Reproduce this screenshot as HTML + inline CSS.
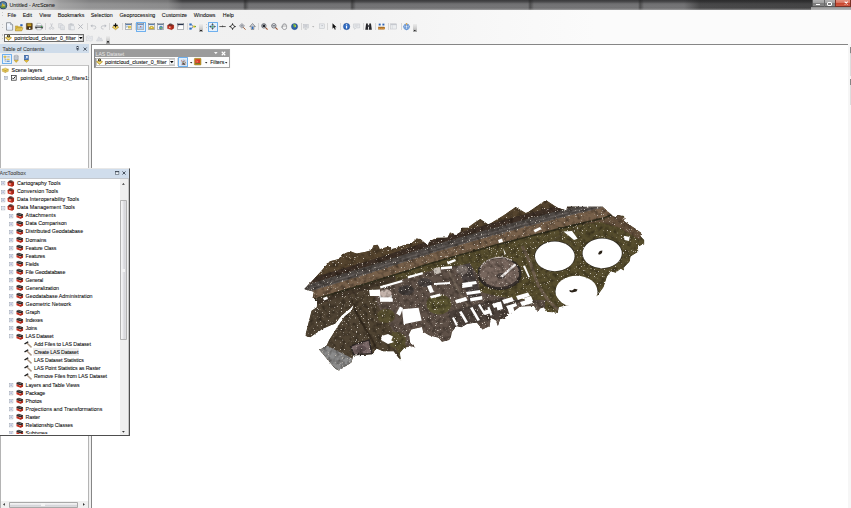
<!DOCTYPE html>
<html lang="en">
<head>
<meta charset="utf-8">
<title>Untitled - ArcScene</title>
<style>
html,body{margin:0;padding:0;}
body{width:851px;height:508px;overflow:hidden;background:#f0f0f0;position:relative;
 font-family:"Liberation Sans",sans-serif;font-size:5.3px;color:#0c0c0c;line-height:1;}
.a{position:absolute;}
svg{overflow:visible;}
.t{position:absolute;white-space:nowrap;line-height:8px;height:8px;-webkit-text-stroke:0.07px currentColor;}
#titlebar{left:0;top:0;width:851px;height:9.8px;
 background:
  linear-gradient(to bottom,rgba(60,60,62,.0) 0,rgba(60,60,62,0) 80%,rgba(200,200,200,.55) 100%),
  linear-gradient(to right,rgba(226,226,226,.96) 0,rgba(212,212,212,.92) 40px,rgba(176,176,176,.8) 60px,rgba(168,168,168,.62) 90px,rgba(160,160,160,.55) 168px,rgba(120,120,120,0) 182px),
  linear-gradient(to right,rgba(30,30,30,0) 684px,rgba(30,30,30,.5) 700px,rgba(30,30,30,.55) 811px),
  linear-gradient(to right,transparent 243px,rgba(30,30,30,.5) 245px,transparent 249px,transparent 350px,rgba(30,30,30,.5) 352px,transparent 356px,transparent 528px,rgba(30,30,30,.45) 530px,transparent 534px,transparent 638px,rgba(30,30,30,.45) 640px,transparent 644px),
  linear-gradient(to bottom,#39393b 0,#4a4a4c 18%,#6e6e70 38%,#757577 60%,#6c6c6e 100%);}
#chrome{left:0;top:9.7px;width:851px;height:34.6px;background:linear-gradient(to right,#f0f0f0 0,#f1f1f1 35%,#fbfbfb 70%,#fbfbfb 100%);}
.menu{top:11.3px;font-size:5.35px;}
.sep{position:absolute;width:0.5px;height:7.2px;background:#d6d6d6;top:23.3px;}
.grip{position:absolute;width:0.8px;height:8.6px;top:22.8px;background:repeating-linear-gradient(to bottom,#cacaca 0,#cacaca 0.5px,transparent 0.5px,transparent 1.4px);}
.ovf{position:absolute;width:4.2px;height:7.6px;background:linear-gradient(to bottom,#ececec,#d0d0d0 50%,#a4a4a4);}
.ovf:after{content:"";position:absolute;left:1.3px;bottom:0.5px;border-left:0.8px solid transparent;border-right:0.8px solid transparent;border-top:1px solid #222;}
.ovf:before{content:"";position:absolute;left:1.3px;bottom:2px;width:1.6px;height:0.45px;background:#333;}
.selbtn{position:absolute;box-sizing:border-box;border:0.7px solid #6fb0ee;background:#e3f0fc;border-radius:0.6px;}
#scene{left:91.2px;top:44.2px;width:757px;height:464px;background:#fff;border-left:1px solid #868686;border-top:1px solid #868686;box-sizing:border-box;}
#tochead{left:0;top:44.3px;width:89.4px;height:8.8px;background:#cfdcea;}
#toctree{left:0.4px;top:64.8px;width:88.4px;height:444px;background:#fff;border:0.6px solid #b4b4b4;border-top-color:#c4c4c4;box-sizing:border-box;}
#atb{left:-1px;top:167.6px;width:130.8px;height:268.4px;background:#fff;border-right:1.2px solid #4e4e4e;border-bottom:1.2px solid #4e4e4e;border-top:0.6px solid #e8e8e8;box-sizing:border-box;overflow:hidden;}
#atbhead{left:0;top:0.8px;width:129.8px;height:9.2px;background:#d0ddec;}
.row{position:absolute;left:0;height:8.05px;width:121px;}
.row .t{top:-0.4px;line-height:8.05px;height:8.05px;font-size:5.3px;}
#las{left:93.6px;top:48.9px;width:136.2px;height:19.2px;background:#fdfdfd;border:0.8px solid #a4a4a4;border-left-color:#8a8a8a;box-sizing:border-box;box-shadow:0.4px 0.4px 0.6px rgba(0,0,0,.35);}
#lashead{left:0;top:0;width:134.6px;height:7.2px;background:#9b9b9b;}
.combo{position:absolute;box-sizing:border-box;background:#fff;border:0.7px solid #6d6d6d;}
.cbtn{position:absolute;box-sizing:border-box;background:linear-gradient(#ffffff,#f0f0f0);border:0.3px solid #d0d0d0;}
.darr{position:absolute;width:0;height:0;border-left:1.5px solid transparent;border-right:1.5px solid transparent;border-top:1.9px solid #111;}
</style>
</head>
<body>

<div id="titlebar" class="a"></div>
<svg class="a" style="left:-1px;top:0.6px;width:8.4px;height:8.4px;" viewBox="0 0 16 16" preserveAspectRatio="none"><circle cx="8" cy="8" r="7.6" fill="#2a3f5c"/><circle cx="8" cy="8" r="6.2" fill="#4f7fa8"/><path d="M2 9 A6.2 6.2 0 0 0 14 9 Z" fill="#5f8a3a"/><path d="M5 10 L7 4 L8.4 8 L9.6 5 L11.4 10Z" fill="#e9d24a"/><path d="M7 4 L8.4 8 L7.4 10 L5 10Z" fill="#c9a62a"/></svg>
<div class="t" style="left:9.5px;top:0.7px;font-size:5.32px;color:#1e1e1e;">Untitled - ArcScene</div>
<div class="a" style="left:811px;top:7px;width:40px;height:2.6px;background:linear-gradient(#8e8e8e,#b8b8b8);"></div>
<div class="a" style="left:811.6px;top:0;width:24px;height:7.2px;background:linear-gradient(#b2b2b2,#a2a2a2 46%,#7c7c7c 54%,#868686);border:0.5px solid #5a5a5a;border-top:none;box-sizing:border-box;border-radius:0 0 0 1.4px;"></div>
<div class="a" style="left:823.6px;top:0;width:0.5px;height:7px;background:#6a6a6a;"></div>
<div class="a" style="left:835.4px;top:0;width:15.6px;height:7.2px;background:linear-gradient(#e4917e,#d9735e 46%,#c8442c 54%,#d05a42);border:0.5px solid #7a3226;border-top:none;box-sizing:border-box;"></div>
<div class="a" style="left:815.8px;top:4px;width:4.4px;height:1.3px;background:#fff;box-shadow:0 0 0.6px #444;"></div>
<div class="a" style="left:827px;top:1.6px;width:4.8px;height:4px;border:1.1px solid #fff;box-sizing:border-box;border-radius:1px;box-shadow:0 0 0.6px #444;"></div>
<svg class="a" style="left:844.3px;top:1.3px;width:4.4px;height:4px;" viewBox="0 0 10 10" preserveAspectRatio="none"><path d="M1.5 1.5L8.5 8.5M8.5 1.5L1.5 8.5" stroke="#fff" stroke-width="2.4"/></svg>
<div id="chrome" class="a"></div>
<div class="grip" style="left:2.4px;top:11.4px;height:7.6px;"></div>
<div class="t menu" style="left:7.6px;">File</div>
<div class="t menu" style="left:22.8px;">Edit</div>
<div class="t menu" style="left:39.3px;">View</div>
<div class="t menu" style="left:57.7px;">Bookmarks</div>
<div class="t menu" style="left:90.8px;">Selection</div>
<div class="t menu" style="left:119.4px;">Geoprocessing</div>
<div class="t menu" style="left:161.8px;">Customize</div>
<div class="t menu" style="left:193.8px;">Windows</div>
<div class="t menu" style="left:222.8px;">Help</div>
<div class="grip" style="left:2.4px;"></div>
<svg class="a" style="left:6.2px;top:23.3px;width:7.1px;height:7.1px;" viewBox="0 0 16 16" preserveAspectRatio="none"><path d="M1.2 -0.6H10.4L15 4V16H1.2Z" fill="#f4f8fe" stroke="#6a7078" stroke-width="1.5"/><path d="M10.4 -0.6V4H15" fill="#d4deec" stroke="#6a7078" stroke-width="1.1"/><path d="M3 8H13V14.6H3Z" fill="#e6eefa"/></svg>
<svg class="a" style="left:15.2px;top:23.6px;width:8.1px;height:7.3px;" viewBox="0 0 16 16" preserveAspectRatio="none"><rect x="10.5" y="0.5" width="4.5" height="4.2" fill="#2e62b8"/><path d="M0.8 4.2H5.6L7 5.8H13.4V14.8H0.8Z" fill="#d9b43c" stroke="#9a7a1c" stroke-width="0.8"/><path d="M0.8 14.8L3.4 8.2H16L13.4 14.8Z" fill="#ecd060" stroke="#9a7a1c" stroke-width="0.8"/><path d="M4 11H12" stroke="#b8962a" stroke-width="1"/></svg>
<svg class="a" style="left:25.6px;top:23.2px;width:6.7px;height:6.9px;" viewBox="0 0 16 16" preserveAspectRatio="none"><rect x="0.8" y="0.8" width="14.4" height="14.4" rx="1" fill="#5a3c14" stroke="#3c260a" stroke-width="0.8"/><rect x="3.4" y="1.2" width="9.2" height="6" fill="#c9a326"/><rect x="3.4" y="3.4" width="9.2" height="1" fill="#8c6c14"/><rect x="4" y="9.6" width="8" height="5.2" fill="#2c2418"/><rect x="7" y="10.4" width="3.6" height="3.6" fill="#f2f2f2"/></svg>
<svg class="a" style="left:34.9px;top:23.2px;width:8.1px;height:7.3px;" viewBox="0 0 16 16" preserveAspectRatio="none"><path d="M4 0.8H10.5L12.4 3V7H4Z" fill="#fafcff" stroke="#8f959c" stroke-width="0.8"/><rect x="0.8" y="6" width="14.4" height="6.4" rx="1.2" fill="#b9bcc2" stroke="#5c5f66" stroke-width="0.8"/><rect x="0.8" y="8.6" width="14.4" height="2.6" fill="#2c2c30"/><circle cx="12.8" cy="8" r="1.3" fill="#2fae3c"/><path d="M3.6 10.4H12.4V15H3.6Z" fill="#f6f8fb" stroke="#80858c" stroke-width="0.8"/></svg>
<div class="sep" style="left:44.9px;"></div>
<svg class="a" style="left:47.8px;top:23.3px;width:7.1px;height:7.1px;" viewBox="0 0 16 16" preserveAspectRatio="none"><path d="M6 1L9 9M10 1L7 9" stroke="#bfc2c8" stroke-width="1.6" fill="none"/><circle cx="5" cy="12" r="2.2" fill="none" stroke="#bfc2c8" stroke-width="1.5"/><circle cx="11" cy="12" r="2.2" fill="none" stroke="#bfc2c8" stroke-width="1.5"/></svg>
<svg class="a" style="left:57.8px;top:23.3px;width:7.1px;height:7.1px;" viewBox="0 0 16 16" preserveAspectRatio="none"><path d="M1.5 1.5H8L10 3.5V11H1.5Z" fill="#e4e6ea" stroke="#bfc2c8" stroke-width="1.2"/><path d="M6 5H12.5L14.5 7V15H6Z" fill="#e9ebee" stroke="#bfc2c8" stroke-width="1.2"/><path d="M8 9H12.6M8 11H12.6M8 13H12.6" stroke="#bfc2c8" stroke-width="0.8"/></svg>
<svg class="a" style="left:67.6px;top:23.3px;width:7.1px;height:7.1px;" viewBox="0 0 16 16" preserveAspectRatio="none"><rect x="1.5" y="2.5" width="11" height="12.5" rx="1" fill="#d4d6db" stroke="#bfc2c8" stroke-width="1.2"/><rect x="4.5" y="1" width="5" height="3" fill="#c2c5cb"/><path d="M6 6H12.5L14.5 8V15.4H6Z" fill="#eceef1" stroke="#bfc2c8" stroke-width="1.1"/></svg>
<svg class="a" style="left:77.4px;top:23.3px;width:7.1px;height:7.1px;" viewBox="0 0 16 16" preserveAspectRatio="none"><path d="M3 3L13 13M13 3L3 13" stroke="#b4b7bd" stroke-width="2.2" fill="none"/></svg>
<div class="sep" style="left:86.9px;"></div>
<svg class="a" style="left:90px;top:23.3px;width:7.1px;height:7.1px;" viewBox="0 0 16 16" preserveAspectRatio="none"><path d="M3.2 6.4H9.5A3.6 3.6 0 0 1 9.5 13.6H8" stroke="#b9bcc2" stroke-width="1.8" fill="none"/><path d="M1 6.4L5.4 2.6V10.2Z" fill="#b9bcc2"/></svg>
<svg class="a" style="left:100px;top:23.3px;width:7.1px;height:7.1px;" viewBox="0 0 16 16" preserveAspectRatio="none"><path d="M12.8 6.4H6.5A3.6 3.6 0 0 0 6.5 13.6H8" stroke="#b9bcc2" stroke-width="1.8" fill="none"/><path d="M15 6.4L10.6 2.6V10.2Z" fill="#b9bcc2"/></svg>
<div class="sep" style="left:108.9px;"></div>
<svg class="a" style="left:112.3px;top:23.3px;width:7.1px;height:7.1px;" viewBox="0 0 16 16" preserveAspectRatio="none"><path d="M0.6 9.4L8 5.2L15.4 9.4L8 15.2Z" fill="#e8c23c" stroke="#8a6a18" stroke-width="0.9"/><path d="M3.6 9.6L8 7.2L12.4 9.6L8 12.6Z" fill="#f6e288"/><path d="M8 0.6V10.2M3.2 5.4H12.8" stroke="#111" stroke-width="2.6"/></svg>
<div class="sep" style="left:121.8px;"></div>
<svg class="a" style="left:124.8px;top:23.3px;width:7.1px;height:7.1px;" viewBox="0 0 16 16" preserveAspectRatio="none"><rect x="0.7" y="1.7" width="14.6" height="12.6" fill="#fdfdfd" stroke="#5f666e" stroke-width="1"/><rect x="1.2" y="2.2" width="13.6" height="2.6" fill="#5d7da8"/><rect x="6.5" y="6.4" width="7" height="6" fill="#e9c84a"/><path d="M3 11L6 8L8 10L10 9" stroke="#5a88c0" stroke-width="1.2" fill="none"/><rect x="2.6" y="6.4" width="3.4" height="2.6" fill="#9bb8dc"/></svg>
<div class="sep" style="left:134.6px;"></div>
<div class="selbtn" style="left:135.9px;top:21.9px;width:9.9px;height:9.8px;"></div>
<svg class="a" style="left:137.4px;top:23.3px;width:7.1px;height:7.1px;" viewBox="0 0 16 16" preserveAspectRatio="none"><rect x="0.7" y="1.7" width="14.6" height="12.6" fill="#eef4fb" stroke="#5f666e" stroke-width="1"/><rect x="1.2" y="2.2" width="13.6" height="2.6" fill="#6c8fbe"/><rect x="2.4" y="6" width="11.2" height="7" fill="#bcd6f2"/><rect x="7" y="7.2" width="2.6" height="2.6" fill="#d04a3a"/><rect x="3" y="10.6" width="10" height="1.4" fill="#7fa6d6"/></svg>
<svg class="a" style="left:147.8px;top:23.3px;width:7.1px;height:7.1px;" viewBox="0 0 16 16" preserveAspectRatio="none"><rect x="0.7" y="1.7" width="14.6" height="12.6" fill="#fdfdfd" stroke="#5f666e" stroke-width="1"/><rect x="1.2" y="2.2" width="13.6" height="2.6" fill="#5d7da8"/><path d="M3 13.6V9.4L5.4 7.6H10.6L13 9.4V13.6Z" fill="#d9b830" stroke="#8c7414" stroke-width="0.7"/><rect x="6.6" y="9" width="2.8" height="2.4" fill="#f3e7a4"/></svg>
<svg class="a" style="left:157.4px;top:23.3px;width:7.1px;height:7.1px;" viewBox="0 0 16 16" preserveAspectRatio="none"><rect x="0.7" y="1.7" width="14.6" height="12.6" fill="#fdfdfd" stroke="#5f666e" stroke-width="1"/><rect x="1.2" y="2.2" width="13.6" height="2.6" fill="#6a7f9c"/><circle cx="9" cy="10.8" r="4" fill="#3b7fc4" stroke="#2a5a90" stroke-width="0.6"/><path d="M6.6 10.6Q8.6 7.6 11.4 9.6Q10.4 12.4 8 12.8Z" fill="#7cbf4a"/><path d="M9 12.2L11 14.4L12.6 12.4" fill="#e8c23c"/></svg>
<svg class="a" style="left:167px;top:23.3px;width:7.1px;height:7.1px;" viewBox="0 0 16 16" preserveAspectRatio="none"><path d="M1 5.4L5.4 2.6L15 4.6V11.6L10.4 15L1 12.4Z" fill="#c93422" stroke="#7a1e14" stroke-width="0.7"/><path d="M1 5.4L5.4 2.6L15 4.6L10.4 7.4Z" fill="#7a2a22"/><path d="M4.4 2.4L8 1L12 2.4V3.8L8 2.6L4.4 3.8Z" fill="#333"/><rect x="5" y="8" width="2.6" height="3.4" fill="#ead6cf"/><path d="M10.4 7.4L15 4.6V11.6L10.4 15Z" fill="#a22818"/></svg>
<svg class="a" style="left:176.8px;top:23.3px;width:7.1px;height:7.1px;" viewBox="0 0 16 16" preserveAspectRatio="none"><rect x="0.7" y="1.7" width="14.6" height="12.6" fill="#ffffff" stroke="#5f666e" stroke-width="1"/><rect x="1.2" y="2.2" width="13.6" height="2.6" fill="#26344c"/><rect x="2.6" y="6" width="2" height="1.4" fill="#333"/></svg>
<div class="sep" style="left:186.6px;"></div>
<svg class="a" style="left:189.2px;top:23.3px;width:7.1px;height:7.1px;" viewBox="0 0 16 16" preserveAspectRatio="none"><rect x="0.8" y="1" width="5.2" height="4.6" fill="#2f6fc2"/><rect x="0.8" y="10.4" width="5.2" height="4.6" fill="#2f6fc2"/><path d="M6 3.4L9 8L6 12.6" stroke="#2a5ea8" stroke-width="1.5" fill="none"/><ellipse cx="11.6" cy="8" rx="3.8" ry="2.6" fill="#e6c23a"/><path d="M12.6 8H15.6" stroke="#3fa24a" stroke-width="2.2"/></svg>
<div class="ovf" style="left:199.1px;top:24.4px;"></div>
<div class="grip" style="left:206.3px;"></div>
<div class="selbtn" style="left:208px;top:21.9px;width:9.9px;height:9.8px;"></div>
<svg class="a" style="left:209.3px;top:23.3px;width:7.1px;height:7.1px;" viewBox="0 0 16 16" preserveAspectRatio="none"><path d="M8 0.6L10.6 4H5.4ZM8 15.4L10.6 12H5.4ZM0.6 8L4 5.4V10.6ZM15.4 8L12 5.4V10.6Z" fill="#222"/><circle cx="8" cy="8" r="3.4" fill="#3f86cc"/><path d="M5.6 8.6Q8 5 10.6 7.6Q9.6 10.6 7 10.6Z" fill="#79c04c"/><circle cx="9.4" cy="6.8" r="1.1" fill="#f0d64c"/></svg>
<svg class="a" style="left:219.2px;top:23.3px;width:7.1px;height:7.1px;" viewBox="0 0 16 16" preserveAspectRatio="none"><path d="M0.8 8H15.2" stroke="#222" stroke-width="1.6"/><path d="M6.4 8Q8 11.6 9.6 8Z" fill="#222"/><path d="M8 4.6V8" stroke="#555" stroke-width="1"/></svg>
<svg class="a" style="left:228.6px;top:23.3px;width:7.1px;height:7.1px;" viewBox="0 0 16 16" preserveAspectRatio="none"><circle cx="8" cy="8" r="4" fill="#fff" stroke="#222" stroke-width="1.8"/><path d="M8 0.6V4.4M8 11.6V15.4M0.6 8H4.4M11.6 8H15.4" stroke="#222" stroke-width="2"/></svg>
<svg class="a" style="left:239px;top:23.3px;width:7.1px;height:7.1px;" viewBox="0 0 16 16" preserveAspectRatio="none"><path d="M9.6 9.6L14.6 15" stroke="#9a5a34" stroke-width="2.2"/><path d="M1 6.4L6.6 1.4L12.4 6.4L6.6 11.6Z" fill="#c9ccd2" stroke="#6c7078" stroke-width="1.2"/><path d="M4 6.4L6.6 4L9.4 6.4L6.6 9Z" fill="#8e939b"/></svg>
<svg class="a" style="left:248.8px;top:23.3px;width:7.1px;height:7.1px;" viewBox="0 0 16 16" preserveAspectRatio="none"><path d="M8 1L14.4 8H11V14.6H5V8H1.6Z" fill="#c8cbd1" stroke="#4e525a" stroke-width="1.1"/><rect x="6.6" y="8" width="3" height="5.6" fill="#2f6fc2"/></svg>
<div class="sep" style="left:258.2px;"></div>
<svg class="a" style="left:260.8px;top:23.3px;width:7.1px;height:7.1px;" viewBox="0 0 16 16" preserveAspectRatio="none"><path d="M9.8 9.8L14.8 14.8" stroke="#9a5030" stroke-width="2.4"/><circle cx="6.4" cy="6.4" r="5" fill="#e9edf2" stroke="#3c4048" stroke-width="1.5"/><rect x="3.6" y="3.6" width="5.6" height="5.6" fill="#23262c"/></svg>
<svg class="a" style="left:270.6px;top:23.3px;width:7.1px;height:7.1px;" viewBox="0 0 16 16" preserveAspectRatio="none"><path d="M9.8 9.8L14.8 14.8" stroke="#9a5030" stroke-width="2.4"/><circle cx="6.4" cy="6.4" r="5" fill="#e9edf2" stroke="#3c4048" stroke-width="1.5"/><rect x="3.2" y="5.2" width="6.4" height="2.4" fill="#555a62"/></svg>
<svg class="a" style="left:280.8px;top:23.3px;width:7.1px;height:7.1px;" viewBox="0 0 16 16" preserveAspectRatio="none"><path d="M3 9.6V5.4Q3.8 4.4 4.8 5.4V3Q5.8 2 6.8 3V2.2Q7.8 1.2 8.8 2.2V3Q9.8 2 10.8 3V5Q12 4.4 12.6 5.4V10.6Q12.6 14.6 8.6 14.6H7Q4.4 14.6 3 11.6L1.4 8.6Q2 7.4 3 8.4Z" fill="#f4f4f4" stroke="#53565c" stroke-width="1.1"/><path d="M5 6V9M7 5V9M9 5V9M11 6V9" stroke="#888" stroke-width="0.7"/></svg>
<svg class="a" style="left:290.8px;top:23.3px;width:7.1px;height:7.1px;" viewBox="0 0 16 16" preserveAspectRatio="none"><circle cx="8" cy="8" r="7" fill="#2a5fae" stroke="#1b3c74" stroke-width="0.9"/><path d="M5 3Q9 1.6 11 4.4Q12.6 7 10.4 9.4Q8.8 11 7 9.4Q4.4 7.4 5 3Z" fill="#6fb244"/><path d="M8.6 5.4Q11 5 11.4 7.4Q10.4 9.4 8.8 8.4Z" fill="#e9d04a"/><path d="M3.4 10Q5 10.4 5.6 12.4Q4.4 12.6 3.4 10Z" fill="#6fb244"/></svg>
<div class="sep" style="left:300.8px;"></div>
<svg class="a" style="left:303.3px;top:23.3px;width:7.1px;height:7.1px;" viewBox="0 0 16 16" preserveAspectRatio="none"><rect x="0.8" y="2.8" width="11" height="8.6" fill="#dcdee2" stroke="#b9bcc2" stroke-width="1"/><path d="M3 5.6H9.6M3 8H9.6" stroke="#b4b7bd" stroke-width="1"/><path d="M6 11.4V14.6M3.4 14.6H9" stroke="#b9bcc2" stroke-width="1.1"/></svg>
<svg class="a" style="left:312.0px;top:26.3px;width:2.4px;height:1.5px;" viewBox="0 0 10 6" preserveAspectRatio="none"><path d="M0 0H10L5 6Z" fill="#b4b4b4"/></svg>
<svg class="a" style="left:318.6px;top:23.3px;width:7.1px;height:7.1px;" viewBox="0 0 16 16" preserveAspectRatio="none"><rect x="1.4" y="2" width="10.6" height="10.6" fill="#e8eaed" stroke="#bcbfc5" stroke-width="1.1"/><rect x="5.4" y="4.4" width="3.4" height="2.6" fill="#c2c5cb"/></svg>
<div class="sep" style="left:327.4px;"></div>
<svg class="a" style="left:330.8px;top:23.3px;width:7.1px;height:7.1px;" viewBox="0 0 16 16" preserveAspectRatio="none"><path d="M3.4 0.8V13L6.4 10.2L8.6 15L10.8 14L8.6 9.4H12.6Z" fill="#111"/></svg>
<div class="sep" style="left:340px;"></div>
<svg class="a" style="left:342.7px;top:23.3px;width:7.1px;height:7.1px;" viewBox="0 0 16 16" preserveAspectRatio="none"><circle cx="8" cy="8" r="7.2" fill="#2b63b8" stroke="#1c4486" stroke-width="0.8"/><circle cx="8" cy="7" r="5" fill="#4a86d8" opacity="0.6"/><rect x="6.8" y="6.6" width="2.4" height="5.8" fill="#fff"/><circle cx="8" cy="4.2" r="1.4" fill="#fff"/></svg>
<svg class="a" style="left:352.6px;top:23.3px;width:7.1px;height:7.1px;" viewBox="0 0 16 16" preserveAspectRatio="none"><path d="M1 2H15V11H7L3.6 14.4V11H1Z" fill="#e6e8eb" stroke="#bfc2c8" stroke-width="1.1"/><path d="M3.6 5H12.4M3.6 7.6H10" stroke="#c3c6cc" stroke-width="1"/></svg>
<div class="sep" style="left:362.7px;"></div>
<svg class="a" style="left:364.8px;top:23.3px;width:7.1px;height:7.1px;" viewBox="0 0 16 16" preserveAspectRatio="none"><path d="M2.4 2.2H6.4L7.2 15H0.6ZM9.6 2.2H13.6L15.4 15H8.8Z" fill="#26262a"/><rect x="5.8" y="5" width="4.4" height="3.6" fill="#3a3a40"/><rect x="2.6" y="0.8" width="3.6" height="2" fill="#444"/><rect x="9.8" y="0.8" width="3.6" height="2" fill="#444"/></svg>
<div class="sep" style="left:374.7px;"></div>
<svg class="a" style="left:377.6px;top:23.3px;width:7.1px;height:7.1px;" viewBox="0 0 16 16" preserveAspectRatio="none"><rect x="1.6" y="1.4" width="4.4" height="4.2" fill="#2f63b4"/><rect x="10" y="1.4" width="4.4" height="4.2" fill="#2f63b4"/><rect x="0.6" y="9" width="14.8" height="5.2" fill="#d9923a" stroke="#8a5a1c" stroke-width="0.7"/><path d="M3 9V11.4M5.6 9V12.4M8 9V11.4M10.6 9V12.4M13 9V11.4" stroke="#5a3a10" stroke-width="0.8"/></svg>
<div class="sep" style="left:387.7px;"></div>
<svg class="a" style="left:390.4px;top:23.3px;width:7.1px;height:7.1px;" viewBox="0 0 16 16" preserveAspectRatio="none"><rect x="0.8" y="1.8" width="14.4" height="11.8" fill="#eceef0" stroke="#bcbfc5" stroke-width="1.1"/><rect x="1.2" y="2.2" width="13.6" height="2.6" fill="#c6c9cf"/><path d="M5.4 5V13.4" stroke="#c6c9cf" stroke-width="0.9"/></svg>
<div class="sep" style="left:400.7px;"></div>
<svg class="a" style="left:403px;top:23.3px;width:7.1px;height:7.1px;" viewBox="0 0 16 16" preserveAspectRatio="none"><circle cx="8" cy="8.6" r="6.4" fill="#eaf2fb" stroke="#2f6cc0" stroke-width="1.5"/><ellipse cx="8" cy="8.6" rx="6.4" ry="2.6" fill="none" stroke="#2f6cc0" stroke-width="1.1"/><ellipse cx="8" cy="8.6" rx="2.6" ry="6.4" fill="none" stroke="#2f6cc0" stroke-width="1.1"/><circle cx="8" cy="2" r="1.8" fill="#e7a83a"/></svg>
<div class="ovf" style="left:412.6px;top:24.4px;"></div>
<div class="grip" style="left:2.4px;top:34.4px;height:7.8px;"></div>
<div class="combo" style="left:3.9px;top:34.2px;width:80.2px;height:7.8px;"></div>
<svg class="a" style="left:5.2px;top:34.4px;width:7px;height:7px;" viewBox="0 0 16 16" preserveAspectRatio="none"><path d="M0.8 8.6L8 4.4L15.2 8.6L8 14.6Z" fill="#e4be38" stroke="#8a6a18" stroke-width="0.9"/><path d="M3.6 8.8L8 6.4L12.4 8.8L8 12Z" fill="#f7e68c"/><circle cx="8" cy="4.6" r="3.6" fill="#3c3420"/><circle cx="8" cy="4.2" r="1.6" fill="#e9d88c"/></svg>
<div class="t" style="left:14.3px;top:34.3px;font-size:5.3px;">pointcloud_cluster_0_filter</div>
<div class="cbtn" style="left:77.6px;top:35.1px;width:5.6px;height:6px;"></div><svg class="a" style="left:78.7px;top:37.2px;width:3.6px;height:2.2px;" viewBox="0 0 10 6" preserveAspectRatio="none"><path d="M0 0H10L5 6Z" fill="#000"/></svg>
<svg class="a" style="left:86.2px;top:34.9px;width:6.8px;height:6.8px;" viewBox="0 0 16 16" preserveAspectRatio="none"><path d="M1 3L6 1.6L10 4L15 2.4V13L10 14.6L6 12.4L1 14Z" fill="#e7e9ec" stroke="#c6c9ce" stroke-width="1"/><path d="M3 5L6 9L9 6L12.6 10" stroke="#cfd2d7" stroke-width="1.2" fill="none"/></svg>
<svg class="a" style="left:96.4px;top:34.9px;width:7.2px;height:6.8px;" viewBox="0 0 16 16" preserveAspectRatio="none"><path d="M1 14L6.4 4L9.4 9L11.4 6.6L15 14Z" fill="#dfe1e5" stroke="#c3c6cc" stroke-width="1"/><path d="M3.6 14L8 9.4L12 14" stroke="#c9ccd1" stroke-width="1" fill="none"/></svg>
<div class="ovf" style="left:106.0px;top:36.2px;"></div>
<div id="scene" class="a"></div>
<svg class="a" style="left:0;top:0;width:851px;height:508px;" viewBox="0 0 851 508">
<defs>
<filter id="rg" x="280" y="180" width="400" height="220" filterUnits="userSpaceOnUse" color-interpolation-filters="sRGB">
 <feTurbulence type="fractalNoise" baseFrequency="0.45" numOctaves="2" seed="11" result="n1"/>
 <feDisplacementMap in="SourceGraphic" in2="n1" scale="2.2" xChannelSelector="R" yChannelSelector="G" result="d"/>
 <feTurbulence type="fractalNoise" baseFrequency="0.85" numOctaves="2" seed="4" result="n2"/>
 <feColorMatrix in="n2" type="matrix" values="0 0 0 0 0.78  0 0 0 0 0.75  0 0 0 0 0.71  0 0 0 9 -6.0" result="dots"/>
 <feGaussianBlur in="dots" stdDeviation="0.45" result="dotsb"/>
 <feComposite in="dotsb" in2="d" operator="in" result="dotsin"/>
 <feColorMatrix in="n2" type="matrix" values="0 0 0 0 0.08  0 0 0 0 0.06  0 0 0 0 0.04  0 -4 0 0 1.5" result="dark"/>
 <feComposite in="dark" in2="d" operator="in" result="darkin"/>
 <feTurbulence type="fractalNoise" baseFrequency="0.22" numOctaves="2" seed="21" result="n3"/>
 <feColorMatrix in="n3" type="matrix" values="0 0 0 0 0.07  0 0 0 0 0.05  0 0 0 0 0.03  1.1 0 0 0 -0.48" result="mot"/>
 <feComposite in="mot" in2="d" operator="in" result="motin"/>
 <feMerge><feMergeNode in="d"/><feMergeNode in="motin"/><feMergeNode in="dotsin"/></feMerge>
</filter>
<filter id="rw" x="280" y="180" width="400" height="220" filterUnits="userSpaceOnUse" color-interpolation-filters="sRGB">
 <feTurbulence type="fractalNoise" baseFrequency="0.45" numOctaves="2" seed="11" result="n1"/>
 <feDisplacementMap in="SourceGraphic" in2="n1" scale="1.6" xChannelSelector="R" yChannelSelector="G"/>
</filter>
<clipPath id="oc"><polygon points="304.4,289.0 314.5,278.4 329.8,261.3 338.7,258.9 342.2,254.2 350.5,251.2 356.4,253.6 365.8,251.8 371.7,250.0 373.5,245.3 377.6,244.7 380.0,248.9 388.5,246.6 392.0,249.0 396.8,247.8 406.3,244.3 412.2,242.5 416.9,238.4 420.4,239.0 428.0,245.5 429.3,241.3 437.0,237.8 447.6,237.8 450.0,232.5 453.5,233.6 454.7,235.4 460.6,231.9 461.2,227.7 467.6,227.7 474.7,222.4 480.3,218.9 488.0,224.2 490.3,223.6 503.3,215.4 515.7,207.1 525.8,213.0 528.7,211.8 545.8,200.0 557.6,207.7 566.5,210.5 567.1,206.8 602.5,206.8 613.1,216.3 616.7,217.4 617.3,215.1 624.3,215.7 624.7,221.6 641.5,232.8 640.3,235.7 644.4,239.9 644.4,244.6 637.9,246.5 638.5,251.8 630.8,256.5 629.7,261.8 624.3,267.2 623.8,270.7 620.8,268.9 615.5,273.1 611.0,271.5 607.2,276.6 603.7,287.2 597.8,295.5 590.0,300.5 578.0,306.3 566.7,305.5 559.0,307.2 557.9,313.1 547.2,312.0 543.7,307.2 540.1,308.4 537.8,312.0 534.0,306.0 520.0,306.6 514.5,310.7 507.4,314.2 505.0,319.0 500.3,319.0 497.9,326.0 495.6,320.1 490.8,317.8 489.7,326.0 482.6,329.6 476.7,322.5 467.2,323.7 461.3,327.2 456.6,326.0 451.9,331.9 450.7,337.8 449.1,340.0 442.0,341.8 438.5,337.7 429.0,335.3 423.1,331.8 422.0,327.1 411.3,329.4 409.0,334.2 410.1,342.4 415.5,347.7 411.3,346.0 404.2,348.3 400.1,353.1 401.3,361.3 393.6,351.3 383.0,351.3 375.9,348.3 372.6,354.2 353.1,355.4 352.5,358.4 351.4,362.5 339.0,370.8 335.4,369.0 319.5,350.1 326.6,345.4 329.2,340.0 332.8,334.3 338.7,324.9 344.6,316.6 351.7,310.7 354.0,304.2 350.5,308.3 341.6,315.4 335.1,323.7 330.4,325.5 323.3,328.4 316.3,333.1 310.3,337.3 305.6,336.0 306.2,332.0 309.2,320.1 311.5,310.7 316.8,307.2 317.4,300.7 312.7,297.7 313.9,291.8"/></clipPath>
</defs>
<g filter="url(#rg)">
<g clip-path="url(#oc)">
<polygon points="304.4,289.0 314.5,278.4 329.8,261.3 338.7,258.9 342.2,254.2 350.5,251.2 356.4,253.6 365.8,251.8 371.7,250.0 373.5,245.3 377.6,244.7 380.0,248.9 388.5,246.6 392.0,249.0 396.8,247.8 406.3,244.3 412.2,242.5 416.9,238.4 420.4,239.0 428.0,245.5 429.3,241.3 437.0,237.8 447.6,237.8 450.0,232.5 453.5,233.6 454.7,235.4 460.6,231.9 461.2,227.7 467.6,227.7 474.7,222.4 480.3,218.9 488.0,224.2 490.3,223.6 503.3,215.4 515.7,207.1 525.8,213.0 528.7,211.8 545.8,200.0 557.6,207.7 566.5,210.5 567.1,206.8 602.5,206.8 613.1,216.3 616.7,217.4 617.3,215.1 624.3,215.7 624.7,221.6 641.5,232.8 640.3,235.7 644.4,239.9 644.4,244.6 637.9,246.5 638.5,251.8 630.8,256.5 629.7,261.8 624.3,267.2 623.8,270.7 620.8,268.9 615.5,273.1 611.0,271.5 607.2,276.6 603.7,287.2 597.8,295.5 590.0,300.5 578.0,306.3 566.7,305.5 559.0,307.2 557.9,313.1 547.2,312.0 543.7,307.2 540.1,308.4 537.8,312.0 534.0,306.0 520.0,306.6 514.5,310.7 507.4,314.2 505.0,319.0 500.3,319.0 497.9,326.0 495.6,320.1 490.8,317.8 489.7,326.0 482.6,329.6 476.7,322.5 467.2,323.7 461.3,327.2 456.6,326.0 451.9,331.9 450.7,337.8 449.1,340.0 442.0,341.8 438.5,337.7 429.0,335.3 423.1,331.8 422.0,327.1 411.3,329.4 409.0,334.2 410.1,342.4 415.5,347.7 411.3,346.0 404.2,348.3 400.1,353.1 401.3,361.3 393.6,351.3 383.0,351.3 375.9,348.3 372.6,354.2 353.1,355.4 352.5,358.4 351.4,362.5 339.0,370.8 335.4,369.0 319.5,350.1 326.6,345.4 329.2,340.0 332.8,334.3 338.7,324.9 344.6,316.6 351.7,310.7 354.0,304.2 350.5,308.3 341.6,315.4 335.1,323.7 330.4,325.5 323.3,328.4 316.3,333.1 310.3,337.3 305.6,336.0 306.2,332.0 309.2,320.1 311.5,310.7 316.8,307.2 317.4,300.7 312.7,297.7 313.9,291.8" fill="#564d2d"/>
<polygon points="300,285 360,270 395,275 400,300 385,330 370,360 300,375" fill="#4f4333"/>
<polygon points="372,292 400,280 440,268 470,264 478,275 480,292 497,296 520,300 545,300 545,320 440,345 410,350 392,330 380,310" fill="#5f5148"/>
<polygon points="352,300 372,292 380,310 392,330 400,360 372,356 366,330" fill="#4f4332"/>
<ellipse cx="438.8" cy="304.2" rx="12.4" ry="10.2" fill="#5c5632"/>
<ellipse cx="397" cy="340" rx="9" ry="8" fill="#585030"/>
<ellipse cx="386" cy="316" rx="9" ry="7" fill="#585030"/>
<polygon points="303.0,287.0 320.0,281.6 349.5,272.6 380.0,263.2 395.0,258.2 432.0,246.3 485.0,231.0 530.0,219.0 575.0,207.4 604.0,200.5 640.0,190.0 300.0,190.0 300.0,289.0" fill="#55442e"/>
<polygon points="303.0,281.0 320.0,275.6 349.5,266.6 380.0,257.2 395.0,252.2 432.0,240.3 485.0,225.0 530.0,213.0 575.0,201.4 604.0,194.5 604.0,200.0 575.0,206.9 530.0,218.5 485.0,230.5 432.0,245.8 395.0,257.7 380.0,262.7 349.5,272.1 320.0,281.1 303.0,286.5" fill="#3e3027"/>
<polygon points="575,208 603,206 625,218 642,234 640,240 620,228 600,222 585,224 572,226" fill="#64503c"/>
<polygon points="303.0,293.5 320.0,288.1 349.5,279.1 380.0,269.7 395.0,264.7 432.0,252.8 485.0,237.5 530.0,225.5 575.0,213.9 604.0,207.0 614.0,213.0 604.0,217.3 575.0,224.1 530.0,235.4 485.0,247.2 432.0,262.2 395.0,273.9 380.0,278.8 349.5,288.1 320.0,296.9 303.0,302.2" fill="#77604a"/>
<polygon points="303.0,302.2 320.0,296.9 349.5,288.1 380.0,278.8 395.0,273.9 395.0,280.4 380.0,285.3 349.5,294.6 320.0,303.4 303.0,308.7" fill="#42362a"/>
<polyline points="303.0,303.0 320.0,297.7 349.5,288.9 380.0,279.6 395.0,274.7 432.0,263.0 485.0,248.0 530.0,236.2 575.0,224.9 604.0,218.1 614.0,213.8" fill="none" stroke="#33301e" stroke-width="1.6"/>
<polygon points="303.0,286.2 320.0,280.8 349.5,271.8 380.0,262.4 395.0,257.4 432.0,245.5 485.0,230.2 530.0,218.2 575.0,206.6 604.0,199.7 604.0,207.2 575.0,214.1 530.0,225.7 485.0,237.7 432.0,253.0 395.0,264.9 380.0,269.9 349.5,279.3 320.0,288.3 303.0,293.7" fill="#4f4945"/>
<polyline points="303.0,290.4 320.0,285.0 349.5,276.0 380.0,266.6 395.0,261.6 432.0,249.7 485.0,234.4 530.0,222.4 575.0,210.8 604.0,203.9" fill="none" stroke="#615b58" stroke-width="1.6"/>
<polyline points="303.0,293.4 320.0,288.0 349.5,279.0 380.0,269.6 395.0,264.6 432.0,252.7 485.0,237.4 530.0,225.4 575.0,213.8 604.0,206.9" fill="none" stroke="#7d7672" stroke-width="0.6"/>
<polyline points="522,246 530,262 538,285 548,300 558,310" fill="none" stroke="#6e5e4c" stroke-width="3"/>
<polyline points="530,262 545,248 562,234 580,228" fill="none" stroke="#5c5238" stroke-width="1.5"/>
<ellipse cx="406" cy="290.4" rx="8" ry="4.8" fill="#443e3c"/>
<ellipse cx="424.9" cy="282.6" rx="7.4" ry="4.4" fill="#494240"/>
<polygon points="433.5,268.5 440,267 441,273 434.5,274.5" fill="#c9c1b8"/>
<polygon points="458,266 470,263 482,298 470,302" fill="#4a4240"/>
<polyline points="449,271 458,290 468,307" fill="none" stroke="#74665a" stroke-width="2.4"/>
<polygon points="448,312 500,298 520,300 505,318 470,324 452,330" fill="#4a403a"/>
<ellipse cx="499.6" cy="273.6" rx="22" ry="16.4" fill="#2f2a26"/>
<ellipse cx="499.2" cy="273" rx="20" ry="14.6" fill="#78675e"/>
<path d="M480 270 A20 14.6 0 0 1 512 260.5" fill="none" stroke="#c9bdb6" stroke-width="1.1"/>
<ellipse cx="501" cy="276" rx="4" ry="3" fill="#4a403c"/>
<polygon points="500.5,276 514.8,263.4 516.4,265 502.5,277.4" fill="#f4f0ee"/>
<path d="M482 280 A20 14.6 0 0 0 519 278" fill="none" stroke="#3a322e" stroke-width="2.2"/>
<ellipse cx="462" cy="270" rx="6" ry="5" fill="#7d726c"/>
<ellipse cx="385.6" cy="296.6" rx="6.4" ry="3.6" fill="#fbfbfb"/>
<ellipse cx="385.6" cy="293.6" rx="6" ry="4.4" fill="#c4b3ab"/>
<polygon points="349.6,345.4 369.7,338.9 372.6,354.2 353.1,355.4" fill="#2e2826"/>
<polygon points="351.6,346.4 368.6,340.8 371,353 354.2,354" fill="#7c6a6a"/>
<ellipse cx="361.5" cy="348.5" rx="5" ry="3" fill="#5e4f50"/>
<polyline points="352,300 358,316 372,340 378,352" fill="none" stroke="#3a2f22" stroke-width="2"/>
<polyline points="316,300 350,292 395,277" fill="none" stroke="#43382a" stroke-width="2.4"/>
<polygon points="319.5,350.1 326.6,345.4 352.5,358.4 351.4,362.5 339,370.8 335.4,369" fill="#8b8b8b"/>
</g>
</g>
<g filter="url(#rw)">
<ellipse cx="554.8" cy="256.2" rx="20.4" ry="15.4" fill="#2a261e"/><ellipse cx="554.8" cy="256.4" rx="19.8" ry="14.8" fill="#fff"/>
<ellipse cx="602.2" cy="253.2" rx="20.2" ry="15.4" fill="#2a261e"/><ellipse cx="602.2" cy="253.4" rx="19.6" ry="14.8" fill="#fff"/>
<path d="M555 294 A21.6 16.4 0 0 1 598.2 294" fill="none" stroke="#2e2a22" stroke-width="1"/><ellipse cx="576.5" cy="291.4" rx="21" ry="15.6" fill="#fff"/>
<polygon points="495.6,303.0 501.0,301.5 503.0,309.0 497.5,310.5" fill="#fff"/>
<polygon points="507.4,307.5 513.0,306.0 514.5,312.0 509.0,313.6" fill="#fff"/>
<polygon points="487.3,307.5 489.3,306.8 492.5,315.0 490.5,315.8" fill="#fff"/>
<polygon points="524.0,298.0 531.0,296.0 533.0,301.0 526.0,303.0" fill="#fff"/>
<polygon points="380.0,286.3 402.0,280.0 402.6,282.0 380.5,288.6" fill="#fff"/>
<polygon points="407.6,276.2 422.5,272.1 423.0,274.2 408.0,278.4" fill="#fff"/>
<polygon points="380.0,297.4 391.8,297.4 391.8,300.8 380.0,300.8" fill="#fff"/>
<polygon points="434.0,283.0 450.0,282.0 450.0,284.0 434.0,285.0" fill="#fff"/>
<polygon points="462.0,285.0 472.0,283.5 472.5,286.5 462.5,288.0" fill="#fff"/>
<polygon points="470.0,298.0 482.0,296.0 482.5,299.5 470.5,301.5" fill="#fff"/>
<polygon points="402.0,309.3 418.6,307.8 421.7,320.4 403.6,324.3" fill="#fff"/>
<polygon points="396.3,313.6 399.9,306.5 403.0,308.0 400.0,316.0" fill="#fff"/>
<polygon points="381.8,336.0 388.0,334.0 393.0,336.5 391.0,341.0 384.0,341.3" fill="#fff"/>
<polygon points="382.2,334.9 394.0,342.0 388.0,344.0 381.0,340.0" fill="#fff"/>
<polygon points="369.0,290.0 380.0,289.5 380.0,296.0 370.0,296.0" fill="#fff"/>
<polygon points="380.4,298.3 392.8,298.3 392.8,301.8 380.4,301.8" fill="#fff"/>
<polygon points="563.5,231.6 572.0,231.0 577.7,238.7 574.0,240.0" fill="#fff"/>
<polygon points="623.8,235.7 629.7,237.0 629.0,241.0 624.5,240.0" fill="#fff"/>
<polygon points="447.0,262.0 455.0,259.0 456.0,261.0 448.0,264.5" fill="#fff"/>
<polygon points="441.0,267.0 452.0,266.0 452.0,268.6 441.0,269.6" fill="#fff"/>
<polygon points="462.0,283.0 476.0,281.0 477.0,284.0 463.0,286.0" fill="#fff"/>
<polygon points="466.0,292.0 480.0,290.0 481.0,293.0 467.0,295.0" fill="#fff"/>
<polygon points="323.0,298.0 327.0,296.5 328.0,299.0 324.0,300.5" fill="#fff"/>
<polygon points="498.0,240.0 502.0,238.5 503.0,242.0 499.0,243.0" fill="#fff"/>
<polygon points="533.5,230.0 540.0,227.0 541.5,229.0 535.0,232.5" fill="#fff"/>
<polygon points="502.0,300.0 512.0,297.0 514.0,301.0 504.0,304.0" fill="#fff"/>
<polygon points="516.0,296.0 528.0,292.5 530.0,296.0 518.0,300.0" fill="#fff"/>
<polygon points="506.0,306.0 516.0,303.0 517.0,306.0 508.0,309.5" fill="#fff"/>
<polygon points="520.0,302.0 531.0,299.0 533.0,303.0 522.0,306.0" fill="#fff"/>
<polygon points="492.0,304.0 499.0,302.0 500.0,306.0 494.0,308.0" fill="#fff"/>
<polygon points="483.0,311.0 490.0,309.0 491.0,313.0 485.0,315.0" fill="#fff"/>
<polygon points="459.0,312.0 461.5,311.0 468.0,322.0 465.5,323.0" fill="#fff"/>
<polygon points="470.0,308.0 472.5,307.0 480.0,320.0 477.5,321.0" fill="#fff"/>
<polygon points="452.0,318.0 454.0,317.0 458.0,325.0 456.0,326.0" fill="#fff"/>
<polygon points="478.0,305.0 480.0,304.0 486.0,314.0 484.0,315.0" fill="#fff"/>
<polygon points="427.0,286.0 431.0,285.0 434.0,292.0 430.0,293.0" fill="#fff"/>
<polygon points="430.0,296.0 440.0,293.5 441.0,296.0 431.0,298.6" fill="#fff"/>
<polygon points="455.0,300.0 466.0,297.0 467.5,300.5 456.5,303.5" fill="#fff"/>
<polygon points="523.0,266.0 525.0,265.4 530.0,277.0 528.4,277.6" fill="#fff"/>
<polygon points="503.0,248.0 506.0,254.0 504.6,254.6" fill="#fff"/>
<path d="M598.2 253.2L599.8 251L602.4 250.4L602 253L600 254.6L598.6 254.4Z" fill="#2a2218"/>
<path d="M569.4 290L572 290.4L574.6 288.8L577.6 289.4L576.4 291.6L572 292.6L569.8 291.8Z" fill="#2a2218"/>
</g>
</svg>
<div id="tochead" class="a"></div>
<div class="t" style="left:2.5px;top:45px;font-size:5.4px;color:#3c3c3c;">Table of Contents</div>
<div id="toctree" class="a"></div>
<svg class="a" style="left:75.6px;top:46.3px;width:3.4px;height:5px;" viewBox="0 0 8 10" preserveAspectRatio="none"><rect x="2" y="0.6" width="4" height="5.4" fill="#e8eef6" stroke="#2e3a4c" stroke-width="1.1"/><path d="M0.6 6.2H7.4M4 6.2V10" stroke="#2e3a4c" stroke-width="1.1"/></svg>
<svg class="a" style="left:82.7px;top:46.6px;width:4.2px;height:4.2px;" viewBox="0 0 10 10" preserveAspectRatio="none"><path d="M1.4 1.4L8.6 8.6M8.6 1.4L1.4 8.6" stroke="#26303e" stroke-width="1.9"/></svg>
<div class="selbtn" style="left:1.7px;top:54px;width:10px;height:10.1px;"></div>
<svg class="a" style="left:3.2px;top:55.2px;width:7.2px;height:7.4px;" viewBox="0 0 16 16" preserveAspectRatio="none"><path d="M1 4L4.4 1.6L8 4L4.4 6.6Z" fill="#e8c23c" stroke="#9a7a1c" stroke-width="0.6"/><path d="M4.4 6.6V13.6H8M4.4 9.6H8" stroke="#777" stroke-width="0.9" fill="none"/><rect x="8.4" y="8" width="6.4" height="2.6" fill="#e8c84a"/><rect x="8.4" y="12.2" width="6.4" height="2.6" fill="#5a8ac8"/><path d="M9.4 4H15" stroke="#4a4a4a" stroke-width="1"/></svg>
<svg class="a" style="left:13.4px;top:55.1px;width:6.4px;height:7.8px;" viewBox="0 0 16 16" preserveAspectRatio="none"><path d="M2.6 10.6L8 8.2L13.4 10.6L8 15.4Z" fill="#e6be38" stroke="#9a7a1c" stroke-width="0.8"/><path d="M3 1.8Q8 -0.4 13 1.8V9.4Q8 11.6 3 9.4Z" fill="#c3c9d2" stroke="#6f7782" stroke-width="0.9"/><ellipse cx="8" cy="2" rx="5" ry="1.5" fill="#eef1f5" stroke="#6f7782" stroke-width="0.7"/></svg>
<svg class="a" style="left:23px;top:55.1px;width:7px;height:7.8px;" viewBox="0 0 16 16" preserveAspectRatio="none"><path d="M2.6 10.8L8 8.4L13.4 10.8L8 15.4Z" fill="#e6be38" stroke="#9a7a1c" stroke-width="0.8"/><rect x="3.2" y="0.6" width="9.2" height="9.4" fill="#2f66b8" stroke="#1e447c" stroke-width="0.8"/><rect x="6.4" y="2.2" width="4.6" height="3.6" fill="#eef3fa"/><path d="M5 7.6H10.4" stroke="#dfe8f4" stroke-width="1.2"/></svg>
<svg class="a" style="left:2.3px;top:67px;width:6.6px;height:5.8px;" viewBox="0 0 16 16" preserveAspectRatio="none"><path d="M0.6 6L8 2.6L15.4 6L8 9.6Z" fill="#f0d668" stroke="#a8861c" stroke-width="0.8"/><path d="M0.6 6V12L8 15.4V9.6ZM8 9.6V15.4L15.4 12V6Z" fill="#d8b030" stroke="#a8861c" stroke-width="0.8"/><path d="M0.6 9L8 12.6L15.4 9" stroke="#fff6c8" stroke-width="0.9" fill="none"/></svg>
<svg class="a" style="left:4.1px;top:76.4px;width:3.9px;height:3.9px;" viewBox="0 0 9 9" preserveAspectRatio="none"><rect x="0.6" y="0.6" width="7.8" height="7.8" fill="#f6f7f9" stroke="#8f99a8" stroke-width="1.2"/><path d="M2.3 4.5H6.7" stroke="#3a53a0" stroke-width="1.1"/></svg>
<svg class="a" style="left:11.3px;top:75.1px;width:5.6px;height:5.6px;" viewBox="0 0 10 10" preserveAspectRatio="none"><rect x="0.7" y="0.7" width="8.6" height="8.6" fill="#fff" stroke="#2c2c2c" stroke-width="1.3"/><path d="M2.4 5L4.2 7L7.8 2.6" stroke="#111" stroke-width="1.6" fill="none"/></svg>
<div class="t" style="left:11.6px;top:65.8px;">Scene layers</div>
<div class="t" style="left:20.4px;top:74px;">pointcloud_cluster_0_filtere1:</div>
<div id="las" class="a"><div id="lashead" class="a"></div><div class="t" style="left:1px;top:-0.4px;font-size:5.1px;color:#e6e6e6;-webkit-text-stroke:0;">LAS Dataset</div><div class="a" style="left:0.2px;top:8.2px;width:0.8px;height:8.6px;background:#999;"></div>
<div class="combo" style="left:1.6px;top:8.4px;width:79.2px;border-color:#c2c2c2;height:8.2px;"></div>
<svg class="a" style="left:1.6px;top:8.6px;width:7px;height:7px;" viewBox="0 0 16 16" preserveAspectRatio="none"><path d="M0.8 8.6L8 4.4L15.2 8.6L8 14.6Z" fill="#e4be38" stroke="#8a6a18" stroke-width="0.9"/><path d="M3.6 8.8L8 6.4L12.4 8.8L8 12Z" fill="#f7e68c"/><circle cx="8" cy="4.6" r="3.6" fill="#3c3420"/><circle cx="8" cy="4.2" r="1.6" fill="#e9d88c"/></svg>
<div class="t" style="left:10.5px;top:8.2px;font-size:5.3px;">pointcloud_cluster_0_filter</div>
<div class="cbtn" style="left:74.9px;top:9.4px;width:5.4px;height:6.2px;"></div><svg class="a" style="left:75.8px;top:11.5px;width:3.6px;height:2.2px;" viewBox="0 0 10 6" preserveAspectRatio="none"><path d="M0 0H10L5 6Z" fill="#000"/></svg>
<div class="sep" style="left:82.4px;top:8.4px;height:7.8px;"></div>
<div class="selbtn" style="left:83.6px;top:7.5px;width:10px;height:10px;"></div>
<svg class="a" style="left:85.1px;top:8.8px;width:7.1px;height:7.1px;" viewBox="0 0 16 16" preserveAspectRatio="none"><rect x="1.6" y="1.2" width="13" height="13.6" fill="#c9d7e8"/><path d="M3 3L6 7M10 3L7 8M4 12L8 9L12 13M11 6L13 10" stroke="#c0483a" stroke-width="1.4"/><path d="M5 9L9 5M9 12L12 8" stroke="#4a9a52" stroke-width="1.3"/><path d="M8 1.4V14.6" stroke="#7a8aa0" stroke-width="0.8" stroke-dasharray="1.4 1.2"/></svg>
<svg class="a" style="left:95.3px;top:11.8px;width:2.4px;height:1.5px;" viewBox="0 0 10 6" preserveAspectRatio="none"><path d="M0 0H10L5 6Z" fill="#222"/></svg>
<svg class="a" style="left:99.6px;top:8.5px;width:7.4px;height:7.4px;" viewBox="0 0 16 16" preserveAspectRatio="none"><rect x="0.8" y="0.8" width="14.4" height="14.4" rx="1.2" fill="#c8a028" stroke="#7c6414" stroke-width="0.9"/><rect x="2.8" y="2.8" width="10.4" height="10.4" fill="#d63826"/><path d="M5 5L9.6 7.4L6 10.6Z" fill="#f07a5a"/><rect x="2.8" y="11.4" width="10.4" height="1.8" fill="#5c8a2c"/></svg>
<svg class="a" style="left:110.0px;top:11.8px;width:2.4px;height:1.5px;" viewBox="0 0 10 6" preserveAspectRatio="none"><path d="M0 0H10L5 6Z" fill="#222"/></svg>
<div class="t" style="left:115.6px;top:8.1px;font-size:5.2px;">Filters</div>
<svg class="a" style="left:130.0px;top:11.8px;width:2.4px;height:1.5px;" viewBox="0 0 10 6" preserveAspectRatio="none"><path d="M0 0H10L5 6Z" fill="#222"/></svg>
<svg class="a" style="left:119.4px;top:2.6px;width:3.6px;height:2.3px;" viewBox="0 0 10 6" preserveAspectRatio="none"><path d="M0 0H10L5 6Z" fill="#f6f6f6"/></svg>
<svg class="a" style="left:126.6px;top:1.2px;width:5px;height:5px;" viewBox="0 0 10 10" preserveAspectRatio="none"><path d="M1.5 1.5L8.5 8.5M8.5 1.5L1.5 8.5" stroke="#fff" stroke-width="2.2"/></svg></div>
<div id="atb" class="a"><div id="atbhead" class="a"></div>
<div class="t" style="left:0.6px;top:0.7px;color:#4a4a4a;">ArcToolbox</div>
<svg class="a" style="left:115.9px;top:2.8000000000000114px;width:4.2px;height:4.0px;" viewBox="0 0 10 10" preserveAspectRatio="none"><rect x="0.7" y="0.7" width="8.6" height="8.6" fill="#eef3fa" stroke="#2e3846" stroke-width="1.2"/><rect x="0.7" y="0.7" width="8.6" height="2.2" fill="#2e3846"/></svg>
<svg class="a" style="left:123.2px;top:2.8000000000000114px;width:4.0px;height:4.0px;" viewBox="0 0 10 10" preserveAspectRatio="none"><path d="M1.2 1.2L8.8 8.8M8.8 1.2L1.2 8.8" stroke="#26303e" stroke-width="2"/></svg>
<div class="a" style="left:0;top:9.600000000000023px;width:130px;height:0.6px;background:#c4c8ce;"></div>
<div class="row" style="top:10.97px;">
<svg class="a" style="left:1.7999999999999998px;top:1.9265000000000003px;width:4.2px;height:4.2px;" viewBox="0 0 9 9" preserveAspectRatio="none"><rect x="0.6" y="0.6" width="7.8" height="7.8" fill="#fdfdfe" stroke="#98a2b2" stroke-width="1.1"/><path d="M2.6 4.5H6.4M4.5 2.6V6.4" stroke="#5468a8" stroke-width="0.9"/></svg>
<svg class="a" style="left:8.4px;top:0.1265000000000005px;width:7.5px;height:6.9px;" viewBox="0 0 16 16" preserveAspectRatio="none"><path d="M1 5.5 L5 2.5 L14.5 4 L15 12 L10.5 15.5 L1.5 13Z" fill="#c93220"/><path d="M1 5.5 L5 2.5 L14.5 4 L10.5 7Z" fill="#5a2a22"/><path d="M4 2 L8 0.8 L12 2 L12 3.6 L10.5 3.2 L8 2.4 L5.5 3.2 L4 3.6Z" fill="#2b2b2b"/><path d="M10.5 7 L15 4 L15 12 L10.5 15.5Z" fill="#a3281a"/><rect x="5" y="7.5" width="2.6" height="4" fill="#e8d8d0"/></svg>
<div class="t" style="left:18.0px;letter-spacing:0.048px;">Cartography Tools</div></div>
<div class="row" style="top:19.03px;">
<svg class="a" style="left:1.7999999999999998px;top:1.9265000000000003px;width:4.2px;height:4.2px;" viewBox="0 0 9 9" preserveAspectRatio="none"><rect x="0.6" y="0.6" width="7.8" height="7.8" fill="#fdfdfe" stroke="#98a2b2" stroke-width="1.1"/><path d="M2.6 4.5H6.4M4.5 2.6V6.4" stroke="#5468a8" stroke-width="0.9"/></svg>
<svg class="a" style="left:8.4px;top:0.1265000000000005px;width:7.5px;height:6.9px;" viewBox="0 0 16 16" preserveAspectRatio="none"><path d="M1 5.5 L5 2.5 L14.5 4 L15 12 L10.5 15.5 L1.5 13Z" fill="#c93220"/><path d="M1 5.5 L5 2.5 L14.5 4 L10.5 7Z" fill="#5a2a22"/><path d="M4 2 L8 0.8 L12 2 L12 3.6 L10.5 3.2 L8 2.4 L5.5 3.2 L4 3.6Z" fill="#2b2b2b"/><path d="M10.5 7 L15 4 L15 12 L10.5 15.5Z" fill="#a3281a"/><rect x="5" y="7.5" width="2.6" height="4" fill="#e8d8d0"/></svg>
<div class="t" style="left:18.0px;letter-spacing:0.035px;">Conversion Tools</div></div>
<div class="row" style="top:27.08px;">
<svg class="a" style="left:1.7999999999999998px;top:1.9265000000000003px;width:4.2px;height:4.2px;" viewBox="0 0 9 9" preserveAspectRatio="none"><rect x="0.6" y="0.6" width="7.8" height="7.8" fill="#fdfdfe" stroke="#98a2b2" stroke-width="1.1"/><path d="M2.6 4.5H6.4M4.5 2.6V6.4" stroke="#5468a8" stroke-width="0.9"/></svg>
<svg class="a" style="left:8.4px;top:0.1265000000000005px;width:7.5px;height:6.9px;" viewBox="0 0 16 16" preserveAspectRatio="none"><path d="M1 5.5 L5 2.5 L14.5 4 L15 12 L10.5 15.5 L1.5 13Z" fill="#c93220"/><path d="M1 5.5 L5 2.5 L14.5 4 L10.5 7Z" fill="#5a2a22"/><path d="M4 2 L8 0.8 L12 2 L12 3.6 L10.5 3.2 L8 2.4 L5.5 3.2 L4 3.6Z" fill="#2b2b2b"/><path d="M10.5 7 L15 4 L15 12 L10.5 15.5Z" fill="#a3281a"/><rect x="5" y="7.5" width="2.6" height="4" fill="#e8d8d0"/></svg>
<div class="t" style="left:18.0px;letter-spacing:0.039px;">Data Interoperability Tools</div></div>
<div class="row" style="top:35.13px;">
<svg class="a" style="left:1.7999999999999998px;top:1.9265000000000003px;width:4.2px;height:4.2px;" viewBox="0 0 9 9" preserveAspectRatio="none"><rect x="0.6" y="0.6" width="7.8" height="7.8" fill="#fdfdfe" stroke="#98a2b2" stroke-width="1.1"/><path d="M2.6 4.5H6.4" stroke="#5468a8" stroke-width="0.9"/></svg>
<svg class="a" style="left:8.4px;top:0.1265000000000005px;width:7.5px;height:6.9px;" viewBox="0 0 16 16" preserveAspectRatio="none"><path d="M1 5.5 L5 2.5 L14.5 4 L15 12 L10.5 15.5 L1.5 13Z" fill="#c93220"/><path d="M1 5.5 L5 2.5 L14.5 4 L10.5 7Z" fill="#5a2a22"/><path d="M4 2 L8 0.8 L12 2 L12 3.6 L10.5 3.2 L8 2.4 L5.5 3.2 L4 3.6Z" fill="#2b2b2b"/><path d="M10.5 7 L15 4 L15 12 L10.5 15.5Z" fill="#a3281a"/><rect x="5" y="7.5" width="2.6" height="4" fill="#e8d8d0"/></svg>
<div class="t" style="left:18.0px;letter-spacing:0.032px;">Data Management Tools</div></div>
<div class="row" style="top:43.19px;">
<svg class="a" style="left:10.3px;top:1.9265000000000003px;width:4.2px;height:4.2px;" viewBox="0 0 9 9" preserveAspectRatio="none"><rect x="0.6" y="0.6" width="7.8" height="7.8" fill="#fdfdfe" stroke="#98a2b2" stroke-width="1.1"/><path d="M2.6 4.5H6.4M4.5 2.6V6.4" stroke="#5468a8" stroke-width="0.9"/></svg>
<svg class="a" style="left:16.9px;top:0.1265000000000005px;width:7.5px;height:6.9px;" viewBox="0 0 16 16" preserveAspectRatio="none"><path d="M1 7 L9.5 10.5 L15 8 L15 12.5 L9.5 15.5 L1 12Z" fill="#c63120"/><path d="M1 4 L6 1.5 L15 5 L15 8 L9.5 10.5 L1 7Z" fill="#2a2626"/><path d="M3.4 4.3 L5.8 3.2 L12 5.6 L9.6 6.7Z" fill="#a39e9a"/><path d="M5 4.5 L6.2 3.9 L10.4 5.5 L9.2 6.1Z" fill="#3a3636"/><path d="M9.5 10.5 L15 8 L15 12.5 L9.5 15.5Z" fill="#a82a1b"/><rect x="7.6" y="9.4" width="2" height="2.2" fill="#ddd"/></svg>
<div class="t" style="left:26.6px;letter-spacing:0.077px;">Attachments</div></div>
<div class="row" style="top:51.24px;">
<svg class="a" style="left:10.3px;top:1.9265000000000003px;width:4.2px;height:4.2px;" viewBox="0 0 9 9" preserveAspectRatio="none"><rect x="0.6" y="0.6" width="7.8" height="7.8" fill="#fdfdfe" stroke="#98a2b2" stroke-width="1.1"/><path d="M2.6 4.5H6.4M4.5 2.6V6.4" stroke="#5468a8" stroke-width="0.9"/></svg>
<svg class="a" style="left:16.9px;top:0.1265000000000005px;width:7.5px;height:6.9px;" viewBox="0 0 16 16" preserveAspectRatio="none"><path d="M1 7 L9.5 10.5 L15 8 L15 12.5 L9.5 15.5 L1 12Z" fill="#c63120"/><path d="M1 4 L6 1.5 L15 5 L15 8 L9.5 10.5 L1 7Z" fill="#2a2626"/><path d="M3.4 4.3 L5.8 3.2 L12 5.6 L9.6 6.7Z" fill="#a39e9a"/><path d="M5 4.5 L6.2 3.9 L10.4 5.5 L9.2 6.1Z" fill="#3a3636"/><path d="M9.5 10.5 L15 8 L15 12.5 L9.5 15.5Z" fill="#a82a1b"/><rect x="7.6" y="9.4" width="2" height="2.2" fill="#ddd"/></svg>
<div class="t" style="left:26.6px;letter-spacing:-0.001px;">Data Comparison</div></div>
<div class="row" style="top:59.29px;">
<svg class="a" style="left:10.3px;top:1.9265000000000003px;width:4.2px;height:4.2px;" viewBox="0 0 9 9" preserveAspectRatio="none"><rect x="0.6" y="0.6" width="7.8" height="7.8" fill="#fdfdfe" stroke="#98a2b2" stroke-width="1.1"/><path d="M2.6 4.5H6.4M4.5 2.6V6.4" stroke="#5468a8" stroke-width="0.9"/></svg>
<svg class="a" style="left:16.9px;top:0.1265000000000005px;width:7.5px;height:6.9px;" viewBox="0 0 16 16" preserveAspectRatio="none"><path d="M1 7 L9.5 10.5 L15 8 L15 12.5 L9.5 15.5 L1 12Z" fill="#c63120"/><path d="M1 4 L6 1.5 L15 5 L15 8 L9.5 10.5 L1 7Z" fill="#2a2626"/><path d="M3.4 4.3 L5.8 3.2 L12 5.6 L9.6 6.7Z" fill="#a39e9a"/><path d="M5 4.5 L6.2 3.9 L10.4 5.5 L9.2 6.1Z" fill="#3a3636"/><path d="M9.5 10.5 L15 8 L15 12.5 L9.5 15.5Z" fill="#a82a1b"/><rect x="7.6" y="9.4" width="2" height="2.2" fill="#ddd"/></svg>
<div class="t" style="left:26.6px;letter-spacing:-0.048px;">Distributed Geodatabase</div></div>
<div class="row" style="top:67.34px;">
<svg class="a" style="left:10.3px;top:1.9265000000000003px;width:4.2px;height:4.2px;" viewBox="0 0 9 9" preserveAspectRatio="none"><rect x="0.6" y="0.6" width="7.8" height="7.8" fill="#fdfdfe" stroke="#98a2b2" stroke-width="1.1"/><path d="M2.6 4.5H6.4M4.5 2.6V6.4" stroke="#5468a8" stroke-width="0.9"/></svg>
<svg class="a" style="left:16.9px;top:0.1265000000000005px;width:7.5px;height:6.9px;" viewBox="0 0 16 16" preserveAspectRatio="none"><path d="M1 7 L9.5 10.5 L15 8 L15 12.5 L9.5 15.5 L1 12Z" fill="#c63120"/><path d="M1 4 L6 1.5 L15 5 L15 8 L9.5 10.5 L1 7Z" fill="#2a2626"/><path d="M3.4 4.3 L5.8 3.2 L12 5.6 L9.6 6.7Z" fill="#a39e9a"/><path d="M5 4.5 L6.2 3.9 L10.4 5.5 L9.2 6.1Z" fill="#3a3636"/><path d="M9.5 10.5 L15 8 L15 12.5 L9.5 15.5Z" fill="#a82a1b"/><rect x="7.6" y="9.4" width="2" height="2.2" fill="#ddd"/></svg>
<div class="t" style="left:26.6px;letter-spacing:-0.001px;">Domains</div></div>
<div class="row" style="top:75.40px;">
<svg class="a" style="left:10.3px;top:1.9265000000000003px;width:4.2px;height:4.2px;" viewBox="0 0 9 9" preserveAspectRatio="none"><rect x="0.6" y="0.6" width="7.8" height="7.8" fill="#fdfdfe" stroke="#98a2b2" stroke-width="1.1"/><path d="M2.6 4.5H6.4M4.5 2.6V6.4" stroke="#5468a8" stroke-width="0.9"/></svg>
<svg class="a" style="left:16.9px;top:0.1265000000000005px;width:7.5px;height:6.9px;" viewBox="0 0 16 16" preserveAspectRatio="none"><path d="M1 7 L9.5 10.5 L15 8 L15 12.5 L9.5 15.5 L1 12Z" fill="#c63120"/><path d="M1 4 L6 1.5 L15 5 L15 8 L9.5 10.5 L1 7Z" fill="#2a2626"/><path d="M3.4 4.3 L5.8 3.2 L12 5.6 L9.6 6.7Z" fill="#a39e9a"/><path d="M5 4.5 L6.2 3.9 L10.4 5.5 L9.2 6.1Z" fill="#3a3636"/><path d="M9.5 10.5 L15 8 L15 12.5 L9.5 15.5Z" fill="#a82a1b"/><rect x="7.6" y="9.4" width="2" height="2.2" fill="#ddd"/></svg>
<div class="t" style="left:26.6px;letter-spacing:-0.176px;">Feature Class</div></div>
<div class="row" style="top:83.45px;">
<svg class="a" style="left:10.3px;top:1.9265000000000003px;width:4.2px;height:4.2px;" viewBox="0 0 9 9" preserveAspectRatio="none"><rect x="0.6" y="0.6" width="7.8" height="7.8" fill="#fdfdfe" stroke="#98a2b2" stroke-width="1.1"/><path d="M2.6 4.5H6.4M4.5 2.6V6.4" stroke="#5468a8" stroke-width="0.9"/></svg>
<svg class="a" style="left:16.9px;top:0.1265000000000005px;width:7.5px;height:6.9px;" viewBox="0 0 16 16" preserveAspectRatio="none"><path d="M1 7 L9.5 10.5 L15 8 L15 12.5 L9.5 15.5 L1 12Z" fill="#c63120"/><path d="M1 4 L6 1.5 L15 5 L15 8 L9.5 10.5 L1 7Z" fill="#2a2626"/><path d="M3.4 4.3 L5.8 3.2 L12 5.6 L9.6 6.7Z" fill="#a39e9a"/><path d="M5 4.5 L6.2 3.9 L10.4 5.5 L9.2 6.1Z" fill="#3a3636"/><path d="M9.5 10.5 L15 8 L15 12.5 L9.5 15.5Z" fill="#a82a1b"/><rect x="7.6" y="9.4" width="2" height="2.2" fill="#ddd"/></svg>
<div class="t" style="left:26.6px;letter-spacing:-0.176px;">Features</div></div>
<div class="row" style="top:91.50px;">
<svg class="a" style="left:10.3px;top:1.9265000000000003px;width:4.2px;height:4.2px;" viewBox="0 0 9 9" preserveAspectRatio="none"><rect x="0.6" y="0.6" width="7.8" height="7.8" fill="#fdfdfe" stroke="#98a2b2" stroke-width="1.1"/><path d="M2.6 4.5H6.4M4.5 2.6V6.4" stroke="#5468a8" stroke-width="0.9"/></svg>
<svg class="a" style="left:16.9px;top:0.1265000000000005px;width:7.5px;height:6.9px;" viewBox="0 0 16 16" preserveAspectRatio="none"><path d="M1 7 L9.5 10.5 L15 8 L15 12.5 L9.5 15.5 L1 12Z" fill="#c63120"/><path d="M1 4 L6 1.5 L15 5 L15 8 L9.5 10.5 L1 7Z" fill="#2a2626"/><path d="M3.4 4.3 L5.8 3.2 L12 5.6 L9.6 6.7Z" fill="#a39e9a"/><path d="M5 4.5 L6.2 3.9 L10.4 5.5 L9.2 6.1Z" fill="#3a3636"/><path d="M9.5 10.5 L15 8 L15 12.5 L9.5 15.5Z" fill="#a82a1b"/><rect x="7.6" y="9.4" width="2" height="2.2" fill="#ddd"/></svg>
<div class="t" style="left:26.6px;letter-spacing:-0.157px;">Fields</div></div>
<div class="row" style="top:99.56px;">
<svg class="a" style="left:10.3px;top:1.9265000000000003px;width:4.2px;height:4.2px;" viewBox="0 0 9 9" preserveAspectRatio="none"><rect x="0.6" y="0.6" width="7.8" height="7.8" fill="#fdfdfe" stroke="#98a2b2" stroke-width="1.1"/><path d="M2.6 4.5H6.4M4.5 2.6V6.4" stroke="#5468a8" stroke-width="0.9"/></svg>
<svg class="a" style="left:16.9px;top:0.1265000000000005px;width:7.5px;height:6.9px;" viewBox="0 0 16 16" preserveAspectRatio="none"><path d="M1 7 L9.5 10.5 L15 8 L15 12.5 L9.5 15.5 L1 12Z" fill="#c63120"/><path d="M1 4 L6 1.5 L15 5 L15 8 L9.5 10.5 L1 7Z" fill="#2a2626"/><path d="M3.4 4.3 L5.8 3.2 L12 5.6 L9.6 6.7Z" fill="#a39e9a"/><path d="M5 4.5 L6.2 3.9 L10.4 5.5 L9.2 6.1Z" fill="#3a3636"/><path d="M9.5 10.5 L15 8 L15 12.5 L9.5 15.5Z" fill="#a82a1b"/><rect x="7.6" y="9.4" width="2" height="2.2" fill="#ddd"/></svg>
<div class="t" style="left:26.6px;letter-spacing:-0.139px;">File Geodatabase</div></div>
<div class="row" style="top:107.61px;">
<svg class="a" style="left:10.3px;top:1.9265000000000003px;width:4.2px;height:4.2px;" viewBox="0 0 9 9" preserveAspectRatio="none"><rect x="0.6" y="0.6" width="7.8" height="7.8" fill="#fdfdfe" stroke="#98a2b2" stroke-width="1.1"/><path d="M2.6 4.5H6.4M4.5 2.6V6.4" stroke="#5468a8" stroke-width="0.9"/></svg>
<svg class="a" style="left:16.9px;top:0.1265000000000005px;width:7.5px;height:6.9px;" viewBox="0 0 16 16" preserveAspectRatio="none"><path d="M1 7 L9.5 10.5 L15 8 L15 12.5 L9.5 15.5 L1 12Z" fill="#c63120"/><path d="M1 4 L6 1.5 L15 5 L15 8 L9.5 10.5 L1 7Z" fill="#2a2626"/><path d="M3.4 4.3 L5.8 3.2 L12 5.6 L9.6 6.7Z" fill="#a39e9a"/><path d="M5 4.5 L6.2 3.9 L10.4 5.5 L9.2 6.1Z" fill="#3a3636"/><path d="M9.5 10.5 L15 8 L15 12.5 L9.5 15.5Z" fill="#a82a1b"/><rect x="7.6" y="9.4" width="2" height="2.2" fill="#ddd"/></svg>
<div class="t" style="left:26.6px;letter-spacing:-0.223px;">General</div></div>
<div class="row" style="top:115.66px;">
<svg class="a" style="left:10.3px;top:1.9265000000000003px;width:4.2px;height:4.2px;" viewBox="0 0 9 9" preserveAspectRatio="none"><rect x="0.6" y="0.6" width="7.8" height="7.8" fill="#fdfdfe" stroke="#98a2b2" stroke-width="1.1"/><path d="M2.6 4.5H6.4M4.5 2.6V6.4" stroke="#5468a8" stroke-width="0.9"/></svg>
<svg class="a" style="left:16.9px;top:0.1265000000000005px;width:7.5px;height:6.9px;" viewBox="0 0 16 16" preserveAspectRatio="none"><path d="M1 7 L9.5 10.5 L15 8 L15 12.5 L9.5 15.5 L1 12Z" fill="#c63120"/><path d="M1 4 L6 1.5 L15 5 L15 8 L9.5 10.5 L1 7Z" fill="#2a2626"/><path d="M3.4 4.3 L5.8 3.2 L12 5.6 L9.6 6.7Z" fill="#a39e9a"/><path d="M5 4.5 L6.2 3.9 L10.4 5.5 L9.2 6.1Z" fill="#3a3636"/><path d="M9.5 10.5 L15 8 L15 12.5 L9.5 15.5Z" fill="#a82a1b"/><rect x="7.6" y="9.4" width="2" height="2.2" fill="#ddd"/></svg>
<div class="t" style="left:26.6px;letter-spacing:-0.061px;">Generalization</div></div>
<div class="row" style="top:123.72px;">
<svg class="a" style="left:10.3px;top:1.9265000000000003px;width:4.2px;height:4.2px;" viewBox="0 0 9 9" preserveAspectRatio="none"><rect x="0.6" y="0.6" width="7.8" height="7.8" fill="#fdfdfe" stroke="#98a2b2" stroke-width="1.1"/><path d="M2.6 4.5H6.4M4.5 2.6V6.4" stroke="#5468a8" stroke-width="0.9"/></svg>
<svg class="a" style="left:16.9px;top:0.1265000000000005px;width:7.5px;height:6.9px;" viewBox="0 0 16 16" preserveAspectRatio="none"><path d="M1 7 L9.5 10.5 L15 8 L15 12.5 L9.5 15.5 L1 12Z" fill="#c63120"/><path d="M1 4 L6 1.5 L15 5 L15 8 L9.5 10.5 L1 7Z" fill="#2a2626"/><path d="M3.4 4.3 L5.8 3.2 L12 5.6 L9.6 6.7Z" fill="#a39e9a"/><path d="M5 4.5 L6.2 3.9 L10.4 5.5 L9.2 6.1Z" fill="#3a3636"/><path d="M9.5 10.5 L15 8 L15 12.5 L9.5 15.5Z" fill="#a82a1b"/><rect x="7.6" y="9.4" width="2" height="2.2" fill="#ddd"/></svg>
<div class="t" style="left:26.6px;letter-spacing:0.017px;">Geodatabase Administration</div></div>
<div class="row" style="top:131.77px;">
<svg class="a" style="left:10.3px;top:1.9265000000000003px;width:4.2px;height:4.2px;" viewBox="0 0 9 9" preserveAspectRatio="none"><rect x="0.6" y="0.6" width="7.8" height="7.8" fill="#fdfdfe" stroke="#98a2b2" stroke-width="1.1"/><path d="M2.6 4.5H6.4M4.5 2.6V6.4" stroke="#5468a8" stroke-width="0.9"/></svg>
<svg class="a" style="left:16.9px;top:0.1265000000000005px;width:7.5px;height:6.9px;" viewBox="0 0 16 16" preserveAspectRatio="none"><path d="M1 7 L9.5 10.5 L15 8 L15 12.5 L9.5 15.5 L1 12Z" fill="#c63120"/><path d="M1 4 L6 1.5 L15 5 L15 8 L9.5 10.5 L1 7Z" fill="#2a2626"/><path d="M3.4 4.3 L5.8 3.2 L12 5.6 L9.6 6.7Z" fill="#a39e9a"/><path d="M5 4.5 L6.2 3.9 L10.4 5.5 L9.2 6.1Z" fill="#3a3636"/><path d="M9.5 10.5 L15 8 L15 12.5 L9.5 15.5Z" fill="#a82a1b"/><rect x="7.6" y="9.4" width="2" height="2.2" fill="#ddd"/></svg>
<div class="t" style="left:26.6px;letter-spacing:0.021px;">Geometric Network</div></div>
<div class="row" style="top:139.82px;">
<svg class="a" style="left:10.3px;top:1.9265000000000003px;width:4.2px;height:4.2px;" viewBox="0 0 9 9" preserveAspectRatio="none"><rect x="0.6" y="0.6" width="7.8" height="7.8" fill="#fdfdfe" stroke="#98a2b2" stroke-width="1.1"/><path d="M2.6 4.5H6.4M4.5 2.6V6.4" stroke="#5468a8" stroke-width="0.9"/></svg>
<svg class="a" style="left:16.9px;top:0.1265000000000005px;width:7.5px;height:6.9px;" viewBox="0 0 16 16" preserveAspectRatio="none"><path d="M1 7 L9.5 10.5 L15 8 L15 12.5 L9.5 15.5 L1 12Z" fill="#c63120"/><path d="M1 4 L6 1.5 L15 5 L15 8 L9.5 10.5 L1 7Z" fill="#2a2626"/><path d="M3.4 4.3 L5.8 3.2 L12 5.6 L9.6 6.7Z" fill="#a39e9a"/><path d="M5 4.5 L6.2 3.9 L10.4 5.5 L9.2 6.1Z" fill="#3a3636"/><path d="M9.5 10.5 L15 8 L15 12.5 L9.5 15.5Z" fill="#a82a1b"/><rect x="7.6" y="9.4" width="2" height="2.2" fill="#ddd"/></svg>
<div class="t" style="left:26.6px;letter-spacing:-0.067px;">Graph</div></div>
<div class="row" style="top:147.87px;">
<svg class="a" style="left:10.3px;top:1.9265000000000003px;width:4.2px;height:4.2px;" viewBox="0 0 9 9" preserveAspectRatio="none"><rect x="0.6" y="0.6" width="7.8" height="7.8" fill="#fdfdfe" stroke="#98a2b2" stroke-width="1.1"/><path d="M2.6 4.5H6.4M4.5 2.6V6.4" stroke="#5468a8" stroke-width="0.9"/></svg>
<svg class="a" style="left:16.9px;top:0.1265000000000005px;width:7.5px;height:6.9px;" viewBox="0 0 16 16" preserveAspectRatio="none"><path d="M1 7 L9.5 10.5 L15 8 L15 12.5 L9.5 15.5 L1 12Z" fill="#c63120"/><path d="M1 4 L6 1.5 L15 5 L15 8 L9.5 10.5 L1 7Z" fill="#2a2626"/><path d="M3.4 4.3 L5.8 3.2 L12 5.6 L9.6 6.7Z" fill="#a39e9a"/><path d="M5 4.5 L6.2 3.9 L10.4 5.5 L9.2 6.1Z" fill="#3a3636"/><path d="M9.5 10.5 L15 8 L15 12.5 L9.5 15.5Z" fill="#a82a1b"/><rect x="7.6" y="9.4" width="2" height="2.2" fill="#ddd"/></svg>
<div class="t" style="left:26.6px;letter-spacing:-0.209px;">Indexes</div></div>
<div class="row" style="top:155.93px;">
<svg class="a" style="left:10.3px;top:1.9265000000000003px;width:4.2px;height:4.2px;" viewBox="0 0 9 9" preserveAspectRatio="none"><rect x="0.6" y="0.6" width="7.8" height="7.8" fill="#fdfdfe" stroke="#98a2b2" stroke-width="1.1"/><path d="M2.6 4.5H6.4M4.5 2.6V6.4" stroke="#5468a8" stroke-width="0.9"/></svg>
<svg class="a" style="left:16.9px;top:0.1265000000000005px;width:7.5px;height:6.9px;" viewBox="0 0 16 16" preserveAspectRatio="none"><path d="M1 7 L9.5 10.5 L15 8 L15 12.5 L9.5 15.5 L1 12Z" fill="#c63120"/><path d="M1 4 L6 1.5 L15 5 L15 8 L9.5 10.5 L1 7Z" fill="#2a2626"/><path d="M3.4 4.3 L5.8 3.2 L12 5.6 L9.6 6.7Z" fill="#a39e9a"/><path d="M5 4.5 L6.2 3.9 L10.4 5.5 L9.2 6.1Z" fill="#3a3636"/><path d="M9.5 10.5 L15 8 L15 12.5 L9.5 15.5Z" fill="#a82a1b"/><rect x="7.6" y="9.4" width="2" height="2.2" fill="#ddd"/></svg>
<div class="t" style="left:26.6px;letter-spacing:-0.195px;">Joins</div></div>
<div class="row" style="top:163.98px;">
<svg class="a" style="left:10.3px;top:1.9265000000000003px;width:4.2px;height:4.2px;" viewBox="0 0 9 9" preserveAspectRatio="none"><rect x="0.6" y="0.6" width="7.8" height="7.8" fill="#fdfdfe" stroke="#98a2b2" stroke-width="1.1"/><path d="M2.6 4.5H6.4" stroke="#5468a8" stroke-width="0.9"/></svg>
<svg class="a" style="left:16.9px;top:0.1265000000000005px;width:7.5px;height:6.9px;" viewBox="0 0 16 16" preserveAspectRatio="none"><path d="M1 7 L9.5 10.5 L15 8 L15 12.5 L9.5 15.5 L1 12Z" fill="#c63120"/><path d="M1 4 L6 1.5 L15 5 L15 8 L9.5 10.5 L1 7Z" fill="#2a2626"/><path d="M3.4 4.3 L5.8 3.2 L12 5.6 L9.6 6.7Z" fill="#a39e9a"/><path d="M5 4.5 L6.2 3.9 L10.4 5.5 L9.2 6.1Z" fill="#3a3636"/><path d="M9.5 10.5 L15 8 L15 12.5 L9.5 15.5Z" fill="#a82a1b"/><rect x="7.6" y="9.4" width="2" height="2.2" fill="#ddd"/></svg>
<div class="t" style="left:26.6px;letter-spacing:-0.195px;">LAS Dataset</div></div>
<div class="row" style="top:172.03px;">
<svg class="a" style="left:25.4px;top:0.1265000000000005px;width:7.5px;height:6.9px;" viewBox="0 0 16 16" preserveAspectRatio="none"><path d="M5 5.8L7.2 3.8L16.8 13.8L14.8 16Z" fill="#bba795"/><path d="M6.4 4.6L7.2 3.8L16.8 13.8L16 14.7Z" fill="#8a7462"/><path d="M0.2 5.8L8 0.4L10 3L2 8.4Z" fill="#1e1e1e"/></svg>
<div class="t" style="left:35.0px;letter-spacing:-0.099px;">Add Files to LAS Dataset</div></div>
<div class="row" style="top:180.09px;">
<svg class="a" style="left:25.4px;top:0.1265000000000005px;width:7.5px;height:6.9px;" viewBox="0 0 16 16" preserveAspectRatio="none"><path d="M5 5.8L7.2 3.8L16.8 13.8L14.8 16Z" fill="#bba795"/><path d="M6.4 4.6L7.2 3.8L16.8 13.8L16 14.7Z" fill="#8a7462"/><path d="M0.2 5.8L8 0.4L10 3L2 8.4Z" fill="#1e1e1e"/></svg>
<div class="t" style="left:35.0px;letter-spacing:-0.162px;background:#f0f0f0;padding:0 0.8px;margin-left:-0.8px;">Create LAS Dataset</div></div>
<div class="row" style="top:188.14px;">
<svg class="a" style="left:25.4px;top:0.1265000000000005px;width:7.5px;height:6.9px;" viewBox="0 0 16 16" preserveAspectRatio="none"><path d="M5 5.8L7.2 3.8L16.8 13.8L14.8 16Z" fill="#bba795"/><path d="M6.4 4.6L7.2 3.8L16.8 13.8L16 14.7Z" fill="#8a7462"/><path d="M0.2 5.8L8 0.4L10 3L2 8.4Z" fill="#1e1e1e"/></svg>
<div class="t" style="left:35.0px;letter-spacing:-0.123px;">LAS Dataset Statistics</div></div>
<div class="row" style="top:196.19px;">
<svg class="a" style="left:25.4px;top:0.1265000000000005px;width:7.5px;height:6.9px;" viewBox="0 0 16 16" preserveAspectRatio="none"><path d="M5 5.8L7.2 3.8L16.8 13.8L14.8 16Z" fill="#bba795"/><path d="M6.4 4.6L7.2 3.8L16.8 13.8L16 14.7Z" fill="#8a7462"/><path d="M0.2 5.8L8 0.4L10 3L2 8.4Z" fill="#1e1e1e"/></svg>
<div class="t" style="left:35.0px;letter-spacing:-0.129px;">LAS Point Statistics as Raster</div></div>
<div class="row" style="top:204.25px;">
<svg class="a" style="left:25.4px;top:0.1265000000000005px;width:7.5px;height:6.9px;" viewBox="0 0 16 16" preserveAspectRatio="none"><path d="M5 5.8L7.2 3.8L16.8 13.8L14.8 16Z" fill="#bba795"/><path d="M6.4 4.6L7.2 3.8L16.8 13.8L16 14.7Z" fill="#8a7462"/><path d="M0.2 5.8L8 0.4L10 3L2 8.4Z" fill="#1e1e1e"/></svg>
<div class="t" style="left:35.0px;letter-spacing:-0.092px;">Remove Files from LAS Dataset</div></div>
<div class="row" style="top:212.30px;">
<svg class="a" style="left:10.3px;top:1.9265000000000003px;width:4.2px;height:4.2px;" viewBox="0 0 9 9" preserveAspectRatio="none"><rect x="0.6" y="0.6" width="7.8" height="7.8" fill="#fdfdfe" stroke="#98a2b2" stroke-width="1.1"/><path d="M2.6 4.5H6.4M4.5 2.6V6.4" stroke="#5468a8" stroke-width="0.9"/></svg>
<svg class="a" style="left:16.9px;top:0.1265000000000005px;width:7.5px;height:6.9px;" viewBox="0 0 16 16" preserveAspectRatio="none"><path d="M1 7 L9.5 10.5 L15 8 L15 12.5 L9.5 15.5 L1 12Z" fill="#c63120"/><path d="M1 4 L6 1.5 L15 5 L15 8 L9.5 10.5 L1 7Z" fill="#2a2626"/><path d="M3.4 4.3 L5.8 3.2 L12 5.6 L9.6 6.7Z" fill="#a39e9a"/><path d="M5 4.5 L6.2 3.9 L10.4 5.5 L9.2 6.1Z" fill="#3a3636"/><path d="M9.5 10.5 L15 8 L15 12.5 L9.5 15.5Z" fill="#a82a1b"/><rect x="7.6" y="9.4" width="2" height="2.2" fill="#ddd"/></svg>
<div class="t" style="left:26.6px;letter-spacing:-0.08px;">Layers and Table Views</div></div>
<div class="row" style="top:220.35px;">
<svg class="a" style="left:10.3px;top:1.9265000000000003px;width:4.2px;height:4.2px;" viewBox="0 0 9 9" preserveAspectRatio="none"><rect x="0.6" y="0.6" width="7.8" height="7.8" fill="#fdfdfe" stroke="#98a2b2" stroke-width="1.1"/><path d="M2.6 4.5H6.4M4.5 2.6V6.4" stroke="#5468a8" stroke-width="0.9"/></svg>
<svg class="a" style="left:16.9px;top:0.1265000000000005px;width:7.5px;height:6.9px;" viewBox="0 0 16 16" preserveAspectRatio="none"><path d="M1 7 L9.5 10.5 L15 8 L15 12.5 L9.5 15.5 L1 12Z" fill="#c63120"/><path d="M1 4 L6 1.5 L15 5 L15 8 L9.5 10.5 L1 7Z" fill="#2a2626"/><path d="M3.4 4.3 L5.8 3.2 L12 5.6 L9.6 6.7Z" fill="#a39e9a"/><path d="M5 4.5 L6.2 3.9 L10.4 5.5 L9.2 6.1Z" fill="#3a3636"/><path d="M9.5 10.5 L15 8 L15 12.5 L9.5 15.5Z" fill="#a82a1b"/><rect x="7.6" y="9.4" width="2" height="2.2" fill="#ddd"/></svg>
<div class="t" style="left:26.6px;letter-spacing:-0.161px;">Package</div></div>
<div class="row" style="top:228.40px;">
<svg class="a" style="left:10.3px;top:1.9265000000000003px;width:4.2px;height:4.2px;" viewBox="0 0 9 9" preserveAspectRatio="none"><rect x="0.6" y="0.6" width="7.8" height="7.8" fill="#fdfdfe" stroke="#98a2b2" stroke-width="1.1"/><path d="M2.6 4.5H6.4M4.5 2.6V6.4" stroke="#5468a8" stroke-width="0.9"/></svg>
<svg class="a" style="left:16.9px;top:0.1265000000000005px;width:7.5px;height:6.9px;" viewBox="0 0 16 16" preserveAspectRatio="none"><path d="M1 7 L9.5 10.5 L15 8 L15 12.5 L9.5 15.5 L1 12Z" fill="#c63120"/><path d="M1 4 L6 1.5 L15 5 L15 8 L9.5 10.5 L1 7Z" fill="#2a2626"/><path d="M3.4 4.3 L5.8 3.2 L12 5.6 L9.6 6.7Z" fill="#a39e9a"/><path d="M5 4.5 L6.2 3.9 L10.4 5.5 L9.2 6.1Z" fill="#3a3636"/><path d="M9.5 10.5 L15 8 L15 12.5 L9.5 15.5Z" fill="#a82a1b"/><rect x="7.6" y="9.4" width="2" height="2.2" fill="#ddd"/></svg>
<div class="t" style="left:26.6px;letter-spacing:-0.017px;">Photos</div></div>
<div class="row" style="top:236.46px;">
<svg class="a" style="left:10.3px;top:1.9265000000000003px;width:4.2px;height:4.2px;" viewBox="0 0 9 9" preserveAspectRatio="none"><rect x="0.6" y="0.6" width="7.8" height="7.8" fill="#fdfdfe" stroke="#98a2b2" stroke-width="1.1"/><path d="M2.6 4.5H6.4M4.5 2.6V6.4" stroke="#5468a8" stroke-width="0.9"/></svg>
<svg class="a" style="left:16.9px;top:0.1265000000000005px;width:7.5px;height:6.9px;" viewBox="0 0 16 16" preserveAspectRatio="none"><path d="M1 7 L9.5 10.5 L15 8 L15 12.5 L9.5 15.5 L1 12Z" fill="#c63120"/><path d="M1 4 L6 1.5 L15 5 L15 8 L9.5 10.5 L1 7Z" fill="#2a2626"/><path d="M3.4 4.3 L5.8 3.2 L12 5.6 L9.6 6.7Z" fill="#a39e9a"/><path d="M5 4.5 L6.2 3.9 L10.4 5.5 L9.2 6.1Z" fill="#3a3636"/><path d="M9.5 10.5 L15 8 L15 12.5 L9.5 15.5Z" fill="#a82a1b"/><rect x="7.6" y="9.4" width="2" height="2.2" fill="#ddd"/></svg>
<div class="t" style="left:26.6px;letter-spacing:0.027px;">Projections and Transformations</div></div>
<div class="row" style="top:244.51px;">
<svg class="a" style="left:10.3px;top:1.9265000000000003px;width:4.2px;height:4.2px;" viewBox="0 0 9 9" preserveAspectRatio="none"><rect x="0.6" y="0.6" width="7.8" height="7.8" fill="#fdfdfe" stroke="#98a2b2" stroke-width="1.1"/><path d="M2.6 4.5H6.4M4.5 2.6V6.4" stroke="#5468a8" stroke-width="0.9"/></svg>
<svg class="a" style="left:16.9px;top:0.1265000000000005px;width:7.5px;height:6.9px;" viewBox="0 0 16 16" preserveAspectRatio="none"><path d="M1 7 L9.5 10.5 L15 8 L15 12.5 L9.5 15.5 L1 12Z" fill="#c63120"/><path d="M1 4 L6 1.5 L15 5 L15 8 L9.5 10.5 L1 7Z" fill="#2a2626"/><path d="M3.4 4.3 L5.8 3.2 L12 5.6 L9.6 6.7Z" fill="#a39e9a"/><path d="M5 4.5 L6.2 3.9 L10.4 5.5 L9.2 6.1Z" fill="#3a3636"/><path d="M9.5 10.5 L15 8 L15 12.5 L9.5 15.5Z" fill="#a82a1b"/><rect x="7.6" y="9.4" width="2" height="2.2" fill="#ddd"/></svg>
<div class="t" style="left:26.6px;letter-spacing:-0.235px;">Raster</div></div>
<div class="row" style="top:252.56px;">
<svg class="a" style="left:10.3px;top:1.9265000000000003px;width:4.2px;height:4.2px;" viewBox="0 0 9 9" preserveAspectRatio="none"><rect x="0.6" y="0.6" width="7.8" height="7.8" fill="#fdfdfe" stroke="#98a2b2" stroke-width="1.1"/><path d="M2.6 4.5H6.4M4.5 2.6V6.4" stroke="#5468a8" stroke-width="0.9"/></svg>
<svg class="a" style="left:16.9px;top:0.1265000000000005px;width:7.5px;height:6.9px;" viewBox="0 0 16 16" preserveAspectRatio="none"><path d="M1 7 L9.5 10.5 L15 8 L15 12.5 L9.5 15.5 L1 12Z" fill="#c63120"/><path d="M1 4 L6 1.5 L15 5 L15 8 L9.5 10.5 L1 7Z" fill="#2a2626"/><path d="M3.4 4.3 L5.8 3.2 L12 5.6 L9.6 6.7Z" fill="#a39e9a"/><path d="M5 4.5 L6.2 3.9 L10.4 5.5 L9.2 6.1Z" fill="#3a3636"/><path d="M9.5 10.5 L15 8 L15 12.5 L9.5 15.5Z" fill="#a82a1b"/><rect x="7.6" y="9.4" width="2" height="2.2" fill="#ddd"/></svg>
<div class="t" style="left:26.6px;letter-spacing:-0.108px;">Relationship Classes</div></div>
<div class="row" style="top:260.62px;">
<svg class="a" style="left:10.3px;top:1.9265000000000003px;width:4.2px;height:4.2px;" viewBox="0 0 9 9" preserveAspectRatio="none"><rect x="0.6" y="0.6" width="7.8" height="7.8" fill="#fdfdfe" stroke="#98a2b2" stroke-width="1.1"/><path d="M2.6 4.5H6.4M4.5 2.6V6.4" stroke="#5468a8" stroke-width="0.9"/></svg>
<svg class="a" style="left:16.9px;top:0.1265000000000005px;width:7.5px;height:6.9px;" viewBox="0 0 16 16" preserveAspectRatio="none"><path d="M1 7 L9.5 10.5 L15 8 L15 12.5 L9.5 15.5 L1 12Z" fill="#c63120"/><path d="M1 4 L6 1.5 L15 5 L15 8 L9.5 10.5 L1 7Z" fill="#2a2626"/><path d="M3.4 4.3 L5.8 3.2 L12 5.6 L9.6 6.7Z" fill="#a39e9a"/><path d="M5 4.5 L6.2 3.9 L10.4 5.5 L9.2 6.1Z" fill="#3a3636"/><path d="M9.5 10.5 L15 8 L15 12.5 L9.5 15.5Z" fill="#a82a1b"/><rect x="7.6" y="9.4" width="2" height="2.2" fill="#ddd"/></svg>
<div class="t" style="left:26.6px;letter-spacing:0px;">Subtypes</div></div>
<div class="a" style="left:121.1px;top:10.200000000000017px;width:6.7px;height:256.6px;background:#efefef;"></div>
<div class="a" style="left:127.8px;top:10.200000000000017px;width:2px;height:256.6px;background:linear-gradient(to right,#fafafa,#e0e0e0 60%,#9a9a9a);"></div>
<div class="a" style="left:121.19999999999999px;top:31.900000000000006px;width:6.5px;height:139.4px;box-sizing:border-box;border:0.6px solid #b2b2b2;border-radius:0.9px;background:linear-gradient(to right,#f6f6f6,#e9e9ec 45%,#d6d6da 55%,#dddde0);"></div>
<div class="a" style="left:122.89999999999999px;top:100.20000000000002px;width:3px;height:3.4px;background:repeating-linear-gradient(to bottom,#8a8a8a 0,#8a8a8a 0.45px,#f4f4f4 0.45px,#f4f4f4 1px);"></div>
<svg class="a" style="left:123.1px;top:14.300000000000011px;width:2.8px;height:1.8px;" viewBox="0 0 10 6" preserveAspectRatio="none"><path d="M0 6L5 0L10 6Z" fill="#333"/></svg>
<svg class="a" style="left:123.1px;top:262.40000000000003px;width:2.8px;height:1.8px;" viewBox="0 0 10 6" preserveAspectRatio="none"><path d="M0 0L5 6L10 0Z" fill="#333"/></svg>
<div class="a" style="left:0;top:265.3px;width:121px;height:1.6px;background:#fff;"></div>
</div>
<div class="a" style="left:1px;top:501.4px;width:86.8px;height:6.6px;background:#f0f0f0;"></div>
<div class="a" style="left:9px;top:501.6px;width:68.6px;height:6.6px;box-sizing:border-box;border:0.6px solid #a8a8a8;border-radius:0.9px;background:linear-gradient(to bottom,#f5f5f5,#e8e8ea 45%,#d4d4d8 55%,#dcdcdf);"></div>
<div class="a" style="left:41.2px;top:503.2px;width:3.6px;height:3px;background:repeating-linear-gradient(to right,#8a8a8a 0,#8a8a8a 0.45px,#f4f4f4 0.45px,#f4f4f4 1px);"></div>
<svg class="a" style="left:3.4px;top:503.4px;width:1.9px;height:2.8px;" viewBox="0 0 6 10" preserveAspectRatio="none"><path d="M6 0L0 5L6 10Z" fill="#333"/></svg>
<svg class="a" style="left:83.4px;top:503.4px;width:1.9px;height:2.8px;" viewBox="0 0 6 10" preserveAspectRatio="none"><path d="M0 0L6 5L0 10Z" fill="#333"/></svg>
<div class="a" style="left:848.2px;top:44.2px;width:2.8px;height:464px;background:#f6f6f6;"></div>
<div class="a" style="left:849.6px;top:46.9px;width:1.4px;height:29.6px;background:linear-gradient(to bottom,#858585 0,#858585 6px,#dcdcdc 6.6px,#dcdcdc 100%);"></div>
<div class="a" style="left:849.6px;top:79.3px;width:1.4px;height:25.5px;background:linear-gradient(to bottom,#858585 0,#858585 5.8px,#dcdcdc 6.4px,#dcdcdc 100%);"></div>
</body>
</html>
